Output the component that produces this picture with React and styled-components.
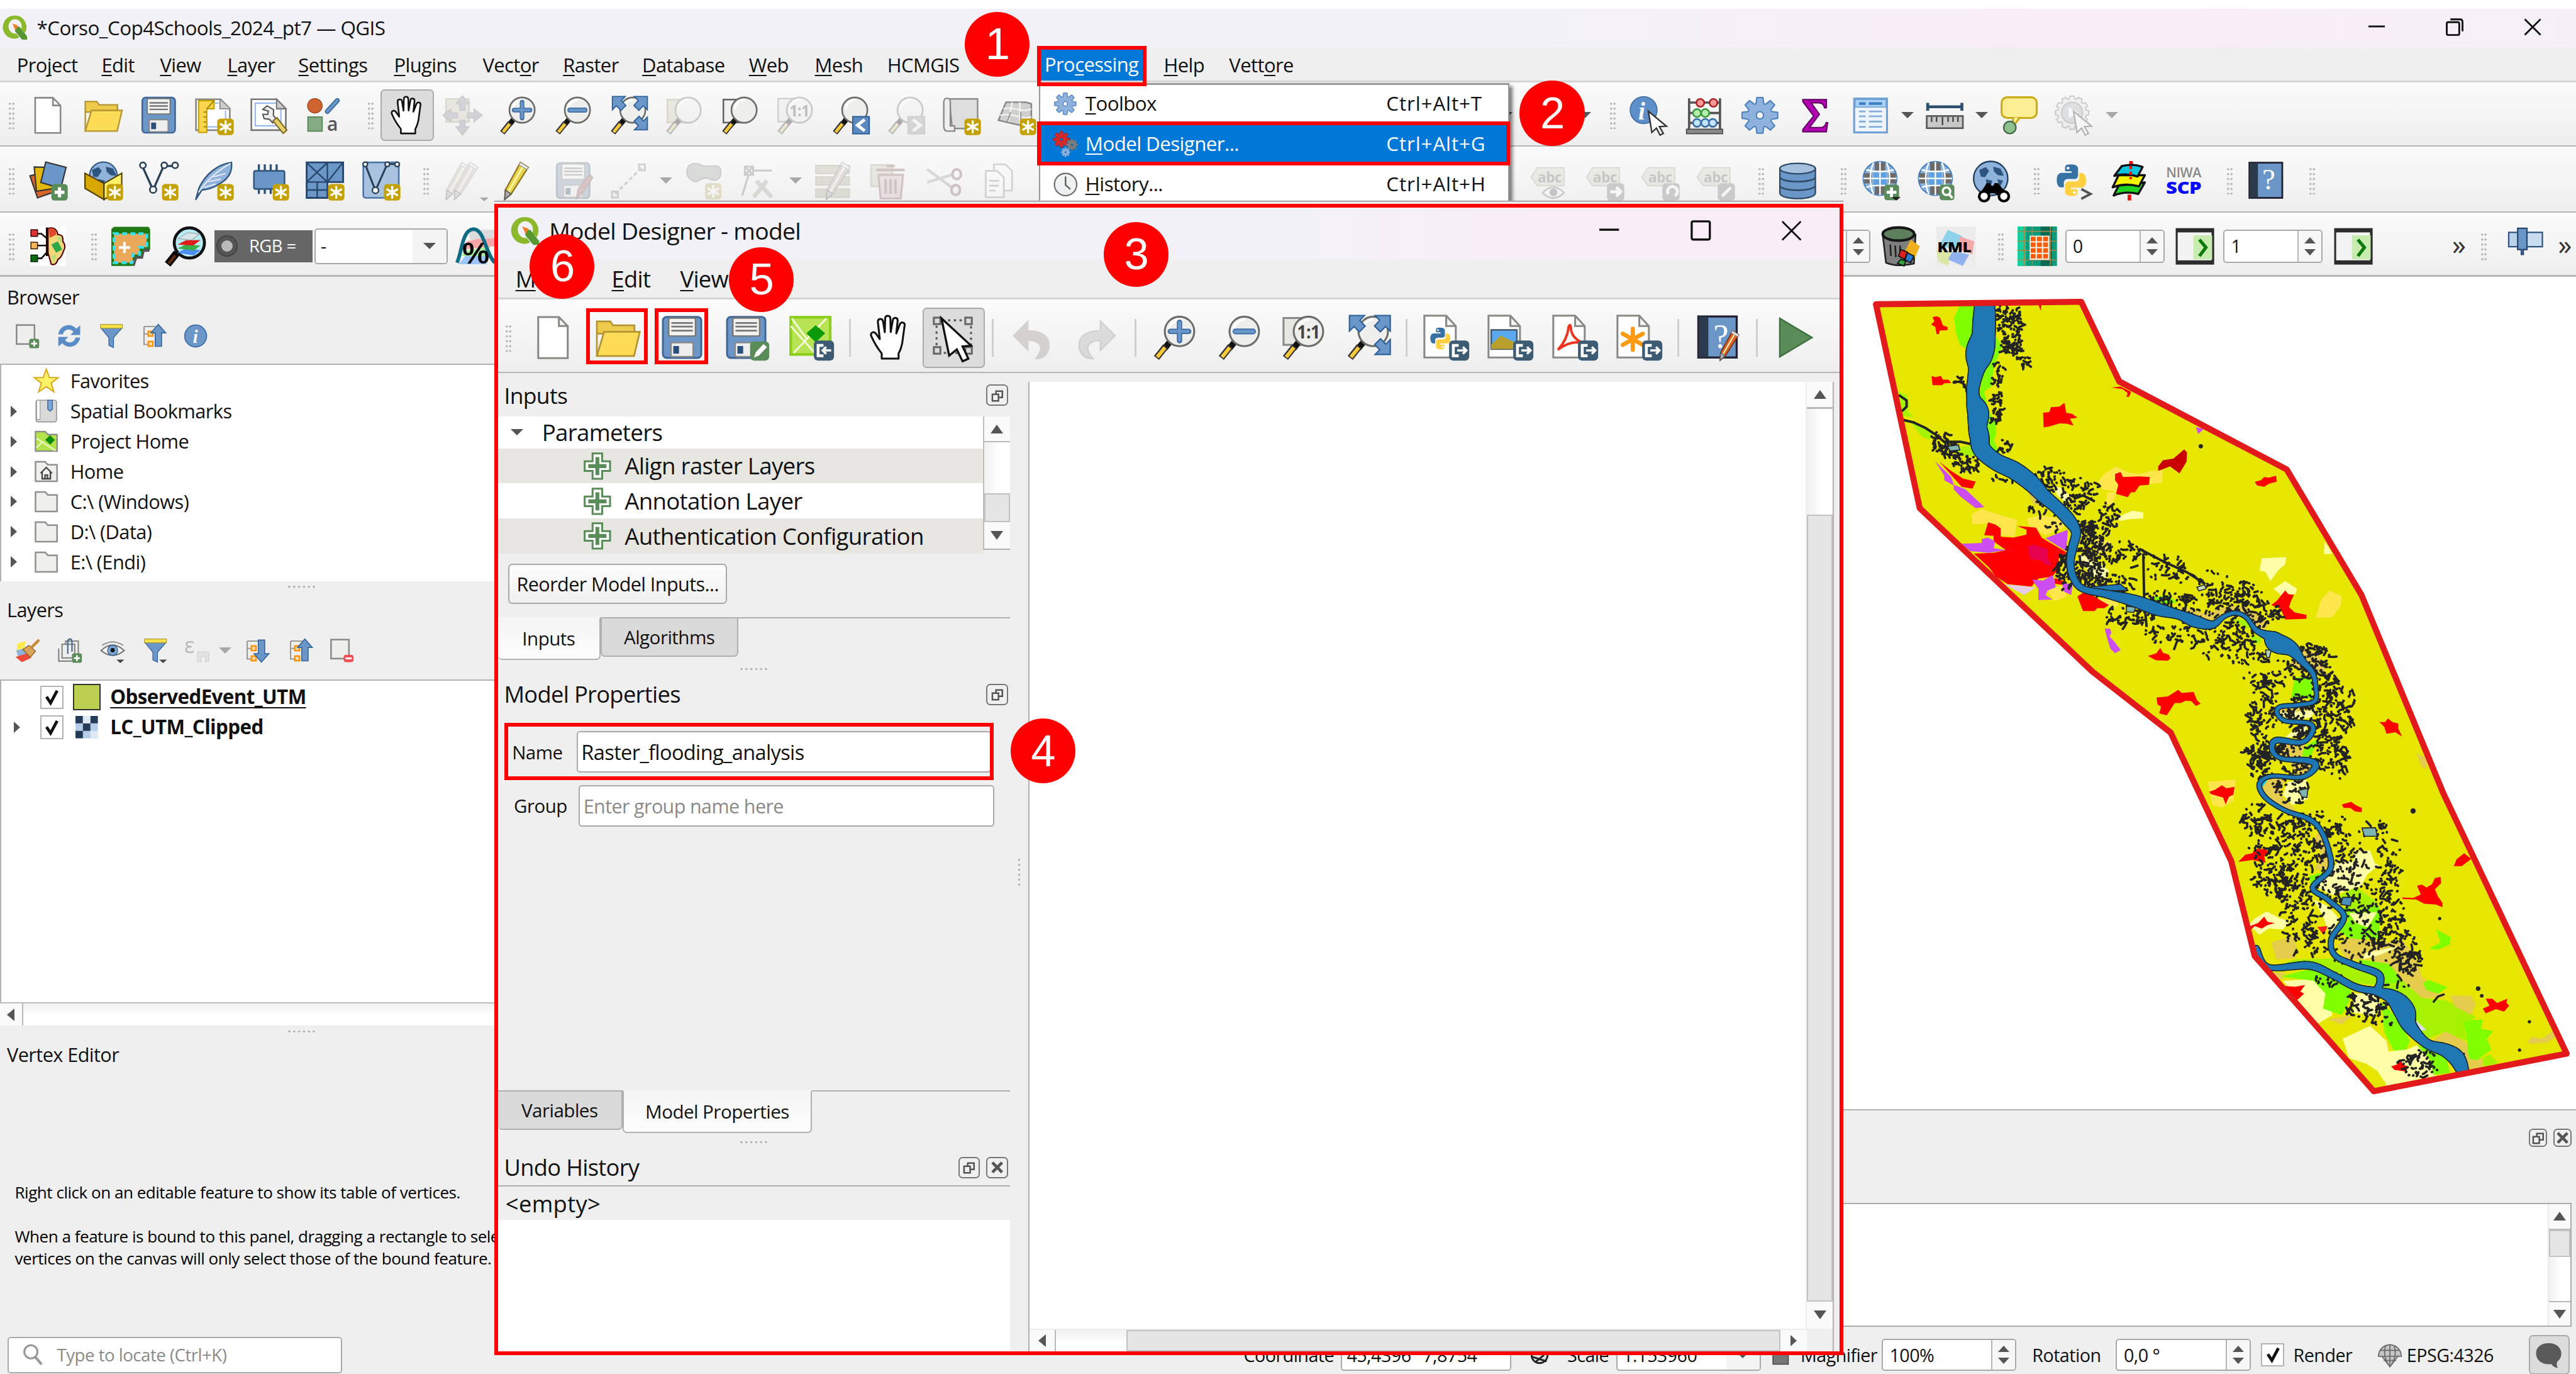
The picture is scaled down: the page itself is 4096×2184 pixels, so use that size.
import React from "react";
import styled, { createGlobalStyle, css } from "styled-components";

/* 1rem is ten layout units; the whole desktop is 156.8rem x 83.6rem. */
const GlobalStyle = createGlobalStyle`
  html { font-size: 26.1224px; }
  body { margin: 0; overflow: hidden; background: #fff; }
  * { box-sizing: border-box; letter-spacing: -0.019em; }
`;

const u = (n) => `${n / 10}rem`;
const RED = "#ff0000";

/* ------------------------------------------------------------------ */
/* Icons                                                               */
/* ------------------------------------------------------------------ */

const Svg = styled.svg`
  display: block;
  flex: none;
  width: ${(p) => u(p.$size || 24)};
  height: ${(p) => u(p.$size || 24)};
  opacity: ${(p) => (p.$faded ? 0.32 : 1)};
  filter: ${(p) => (p.$faded ? "saturate(0.5)" : "none")};
  overflow: visible;
`;

const NewBadge = ({ x = 14, y = 14, s = 1 }) => (
  <g transform={`translate(${x} ${y}) scale(${s})`}>
    <rect width="10" height="10" rx="2" fill="#c4a000" />
    <g stroke="#fff" strokeWidth="1.3" strokeLinecap="round">
      <path d="M5 1.6V8.4M2 3.3L8 6.7M8 3.3L2 6.7" />
    </g>
  </g>
);
const PlusBadge = ({ x = 14, y = 14 }) => (
  <g transform={`translate(${x} ${y})`}>
    <rect width="10" height="10" rx="2" fill="#5a8c5a" />
    <path d="M5 2V8M2 5H8" stroke="#fff" strokeWidth="2" />
  </g>
);
const ExportBadge = ({ back }) => (
  <g transform="translate(13.5 13.5)">
    <rect width="10.5" height="10.5" rx="2" fill="#3d5c73" />
    <path d="M5 2.6H2.2V8H5" fill="none" stroke="#fff" strokeWidth="1.5" />
    <path d={back ? "M9 5.2H4.6M6.4 3.4L4.6 5.2L6.4 7" : "M4.2 5.2H9M7.2 3.4L9 5.2L7.2 7"} fill="none" stroke="#fff" strokeWidth="1.2" />
  </g>
);
const Page = () => (
  <path d="M4.2 1.3H15L19.6 6V22.7H4.2Z M15 1.3V6H19.6" fill="#fff" stroke="#888a85" strokeWidth="1" />
);
const Lens = ({ children }) => (
  <g>
    <path d="M9.3 14.6L6.9 17.6" stroke="#111" strokeWidth="3.2" />
    <path d="M7.4 16.6L2.6 22.6" stroke="#333" strokeWidth="3.4" />
    <path d="M7 17.2L3 22.2" stroke="#f9c93c" strokeWidth="1.9" />
    <circle cx="14.6" cy="8.8" r="7.7" fill="#eeeeec" stroke="#6b6d68" strokeWidth="1" />
    <path d="M9 8a6 6 0 0 1 6-5.4" stroke="#fff" strokeWidth="1.2" fill="none" />
    {children}
  </g>
);
const Pointer = () => (
  <path d="M11.5 9.5L22.5 18.6L18.2 18.9L20.6 23L18.6 24L16.4 19.8L13.6 22.4Z" fill="#fff" stroke="#333" strokeWidth="0.9" />
);
const gearPath = (cx, cy, r, n = 8, inner = 0.68) => {
  let d = "";
  for (let i = 0; i < n; i++) {
    const a = (i / n) * Math.PI * 2 - Math.PI / 2;
    const pts = [[-0.32, inner], [-0.17, 1], [0.17, 1], [0.32, inner]];
    pts.forEach(([o, k], j) => {
      const x = cx + Math.cos(a + (o * 8) / n) * r * k;
      const y = cy + Math.sin(a + (o * 8) / n) * r * k;
      d += `${i === 0 && j === 0 ? "M" : "L"}${x.toFixed(2)} ${y.toFixed(2)}`;
    });
  }
  return d + "Z";
};
const Gear = ({ cx = 12, cy = 12, r = 11, fill = "#8fb2dc", stroke = "#4a7fc0", hole = "#fff", n = 8 }) => (
  <g>
    <path d={gearPath(cx, cy, r, n)} fill={fill} stroke={stroke} strokeWidth={r / 14} strokeLinejoin="round" />
    <circle cx={cx} cy={cy} r={r * 0.2} fill={hole} stroke={stroke} strokeWidth={r / 14} />
  </g>
);
const Python = () => (
  <g>
    <path d="M11.5 1.5C7.6 1.5 7.8 3.2 7.8 3.2V6H12V7H5.6S2.4 6.7 2.4 11.6S5 16.4 5 16.4H7V13.5S7 11 9.6 11H13.8S16.2 11 16.2 8.6V4.2S16.4 1.5 11.5 1.5Z" fill="#3672a4" />
    <path d="M12 22C15.9 22 15.7 20.3 15.7 20.3V17.6H11.5V16.6H18S21.4 17 21.4 12S18.6 7.2 18.6 7.2H16.9V10.1S17 12.6 14.4 12.6H10.2S7.8 12.6 7.8 15V19.4S7.4 22 12 22Z" fill="#ffd040" />
    <circle cx="9.7" cy="3.9" r=".9" fill="#fff" /><circle cx="13.9" cy="19.7" r=".9" fill="#fff" />
  </g>
);
const Floppy = () => (
  <g>
    <rect x="2" y="1.2" width="20" height="21.4" rx="2" fill="#6b97c8" stroke="#3f6798" strokeWidth="1" />
    <rect x="5" y="1.8" width="14" height="9.4" rx=".8" fill="#f2f2f0" stroke="#777" strokeWidth=".8" />
    <path d="M6.4 4.4H17.6M6.4 6.3H17.6M6.4 8.4H17.6" stroke="#777" strokeWidth=".9" />
    <rect x="6.2" y="14.6" width="11.6" height="7.4" rx=".8" fill="#eee" stroke="#888" strokeWidth=".8" />
    <rect x="7.4" y="16.4" width="3" height="4" fill="#2b5080" />
  </g>
);
const Pencil = ({ c = "#e6d34a", tip = "#8a6d1c", dx = 0 }) => (
  <g transform={`translate(${dx} 0)`}>
    <path d="M13.6 .8L18.4 3.8L8 20L4 23.4L4.4 17.6Z" fill={c} stroke={tip} strokeWidth=".8" />
    <path d="M15.8 2.2L6.2 18.8" stroke="#fff8b0" strokeWidth="1" />
    <path d="M13.6 .8L18.4 3.8L17.6 5.2L12.7 2.2Z" fill="#eee" stroke="#999" strokeWidth=".5" />
    <path d="M4.4 17.6L8 20L4 23.4Z" fill="#aaa" stroke="#555" strokeWidth=".6" />
  </g>
);
const Hand = () => (
  <path d="M8.2 23V20.3C6 17.6 4.4 15 2.8 11.4C2 9.4 4 8.4 5.2 10L7.2 12.8L6.2 3.9C6.1 1.9 8.6 1.7 8.9 3.6L9.8 9.2L10 2C10.1 .2 12.6 .2 12.7 2L12.9 9.1L14 2.8C14.4 1.1 16.7 1.5 16.5 3.4L15.8 9.8L17.7 5C18.5 3.4 20.6 4.2 20.1 6L19.2 12.6C18.9 16 18.2 18.2 17 20.3V23Z" fill="#fff" stroke="#111" strokeWidth="1" strokeLinejoin="round" />
);
const FullArrows = () => (
  <g fill="#6b97c8" stroke="#2d5f99" strokeWidth=".7">
    <path d="M2.2 .5H10L7.6 3L10.4 6L7.4 9L4.6 6.2L2.2 8.6Z" />
    <path d="M23.5 .5V8.6L21 6.2L18.3 9L15.3 6L18 3L15.6 .5Z" />
    <path d="M23.5 20.8H15.6L18 18.4L15.4 15.6L18.4 12.6L21.2 15.4L23.5 13Z" />
  </g>
);
const GlobeIcon = () => (
  <g>
    <circle cx="12" cy="10.6" r="10.2" fill="#8db4dd" stroke="#4b83c3" strokeWidth=".9" />
    <path d="M8.8 .9H15.2V5.8H8.8ZM2.4 7.4H7V13.6H2.4ZM17 7.4H21.6V13.6H17ZM8.8 15.4H15.2V20.2H8.8Z" fill="#6d6a68" />
    <rect x="8.2" y="6.4" width="7.6" height="8.4" fill="#5da0e4" />
    <path d="M12 .4V20.8M1.8 10.6H22.2M3.6 5.2C8 6.8 16 6.8 20.4 5.2M3.6 16C8 14.4 16 14.4 20.4 16M8 .9C5.6 7 5.6 14 8 20.2M16 .9C18.4 7 18.4 14 16 20.2" fill="none" stroke="#fff" strokeWidth=".9" />
  </g>
);
const EarthPatches = () => (
  <path d="M5 5.5L9 3.6L11 6L8.6 9.8L6 9.6ZM13.5 3.4L18 4.6L20 9L16.4 8.6L14 6.4ZM9 11L13 12L11.6 17L9.4 14ZM16 11L19.6 12L17.4 16Z" fill="#2d5580" />
);
const Label = ({ children }) => (
  <g>
    <path d="M1 9.8L4.8 4H21V15H4.8Z" fill="#d7d0b0" stroke="#a9a282" strokeWidth=".8" />
    <text x="5" y="13" fontFamily="Open Sans" fontWeight="700" fontSize="8.6" fill="#666">abc</text>
    {children}
  </g>
);
const GreyBadge = ({ d }) => (
  <g transform="translate(13.5 13.5)"><rect width="10.5" height="10.5" rx="2" fill="#777" /><path d={d} fill="none" stroke="#fff" strokeWidth="1.8" /></g>
);
const Book = () => (
  <g>
    <rect x="1.8" y="1" width="20" height="21.4" fill="#6b97c8" stroke="#223" strokeWidth="1.1" />
    <rect x="2" y="1.2" width="5" height="21" fill="#2b3b4d" />
    <text x="9.6" y="17.4" fontFamily="Liberation Serif" fontSize="18" fill="#fff">?</text>
  </g>
);
const TreeArrow = ({ up }) => (
  <g>
    <path d="M3 3V20H9M3 10H9M3 3H14" fill="none" stroke="#999b96" strokeWidth="1.3" />
    <rect x="7" y="7.6" width="4.4" height="4.4" fill="#fcd9a8" stroke="#ff9000" strokeWidth="1.4" />
    <rect x="7" y="17.2" width="4.4" height="4.4" fill="#fcd9a8" stroke="#ff9000" strokeWidth="1.4" />
    <path d={up ? "M16.5 1L23.6 9H19.6V21.8H13.6V9H9.6Z" : "M16.5 23L23.6 15H19.6V2H13.6V15H9.6Z"} fill="#6b97c8" stroke="#38659c" strokeWidth="1" />
  </g>
);
const Funnel = () => (
  <g>
    <path d="M2 4.4L9.6 13.6V21L14 23V13.6L22 4.4Z" fill="#6b97c8" stroke="#38659c" strokeWidth=".8" />
    <rect x="1.6" y="1" width="20.8" height="3.6" fill="#f8e24a" stroke="#a89a30" strokeWidth=".7" />
  </g>
);
const Folder = ({ fill = "#efefed", children }) => (
  <g>
    <path d="M1.5 2.5H11L13.6 5.4H22.5V21.5H1.5Z" fill={fill} stroke="#8e908b" strokeWidth="1.5" strokeLinejoin="round" />
    {children}
  </g>
);
const MiniCaret = () => <path d="M15.6 20.6H23L19.3 23.8Z" fill="#444" />;

const ART = {
  newDoc: <Page />,
  open: (
    <g stroke="#b39532" strokeWidth=".9" fill="#e0b93a">
      <path d="M1 21.6V3.6H8L9.4 5.6H20.6V10H1Z" fill="#edc94c" />
      <path d="M1 21.6L4.8 9H23.4L20.4 21.6Z" fill="#fcdb56" />
    </g>
  ),
  save: <Floppy />,
  saveAs: (<g><Floppy /><rect x="14" y="14" width="10" height="10" rx="2" fill="#5a8c5a" /><path d="M16 22.4L17 19.6L21 15.4L22.8 17L18.6 21.4Z" fill="#fff" /></g>),
  newLayout: (<g><path d="M1 2.2H16L21.6 8V21H1Z" fill="#fff" stroke="#888" /><path d="M4 4.5H15M19 9V19H5V5" fill="none" stroke="#9bbcf0" strokeWidth=".8" /><path d="M15.6 2.4V8H21.6" fill="#ccc" stroke="#888" strokeWidth=".7" /><path d="M2.6 3H12V8H7.6V22.4H2.6Z" fill="#fbd64c" stroke="#c4a000" strokeWidth=".8" /><path d="M5.6 10H7.4M5.6 13H7.4M5.6 16H7.4M5.6 19H7.4M7.6 8L12 3" stroke="#a08000" strokeWidth=".7" /><NewBadge /></g>),
  layoutMgr: (<g><path d="M1 2.2H16.4L22 8V21H1Z" fill="#fff" stroke="#777" /><rect x="3.4" y="4.6" width="15.6" height="13.8" fill="none" stroke="#9bbcf0" strokeWidth=".9" /><path d="M16.4 2.2V8H22Z" fill="#ccc" stroke="#777" strokeWidth=".8" /><path d="M8 8.4L10.6 6.2L14.6 8.6L14.4 12L16.4 14.6L14 16.6L12 14.4L8.8 14L8 11.4L11 11.4L11.4 9.4Z" fill="#eee" stroke="#555" strokeWidth=".8" /><path d="M14.2 15.4L16.6 13.4L22.6 21L20.4 23Z" fill="#e8d06a" stroke="#7b6a28" strokeWidth=".8" /></g>),
  style: (<g><ellipse cx="6" cy="6.2" rx="4.4" ry="4.4" fill="#d06430" stroke="#a14a20" strokeWidth=".6" /><path d="M19.6 3L13.6 9.6" stroke="#3c6b9e" strokeWidth="3" strokeLinecap="round" /><path d="M19.6 3L13.6 9.6" stroke="#6b97c8" strokeWidth="1.6" strokeLinecap="round" /><rect x="1.8" y="13" width="8.6" height="8.6" fill="#85ac85" stroke="#5b8c5b" strokeWidth=".8" /><text x="13.4" y="21.4" fontFamily="Open Sans" fontWeight="600" fontSize="11.5" fill="#555">a</text></g>),
  hand: <Hand />,
  panSel: (<g><rect x="2" y="2" width="14" height="14" fill="#cfc8a0" stroke="#a49c74" /><path d="M12 0L16 5H13.6V9H10.4V5H8ZM12 24L16 19H13.6V15H10.4V19H8ZM0 12L5 8V10.4H9V13.6H5V16ZM24 12L19 8V10.4H15V13.6H19V16Z" fill="#88a" stroke="#778" strokeWidth=".6" /></g>),
  zoomIn: (<Lens><path d="M14.6 4V13.6M9.8 8.8H19.4" stroke="#3f6fa8" strokeWidth="2.8" strokeLinecap="round" /><path d="M14.6 4.2V13.4M10 8.8H19.2" stroke="#6b97c8" strokeWidth="1.5" strokeLinecap="round" /></Lens>),
  zoomOut: (<Lens><path d="M10 8.8H19.2" stroke="#3f6fa8" strokeWidth="3" strokeLinecap="round" /><path d="M10 8.8H19.2" stroke="#6b97c8" strokeWidth="1.7" strokeLinecap="round" /></Lens>),
  zoomFull: (<g><Lens /><FullArrows /></g>),
  zoomSel: (<g><rect x="2" y="2.4" width="14" height="14" fill="#d8ce92" stroke="#a49c74" /><Lens /></g>),
  zoomLayer: (<g><rect x="2" y="2.4" width="13" height="14" fill="#f1f1ef" stroke="#666" strokeWidth="1" /><Lens /></g>),
  zoomNative: (<g><rect x="1.6" y="1.8" width="12" height="14" fill="#e6e6e2" stroke="#888" strokeWidth="1" /><Lens><text x="8.6" y="12.6" fontFamily="Open Sans" fontWeight="700" fontSize="9.6" textLength="12" lengthAdjust="spacingAndGlyphs" fill="#444">1:1</text></Lens></g>),
  zoomLast: (<g><Lens /><rect x="13.4" y="12.8" width="10" height="10.4" fill="#5b8ac0" stroke="#2d5f99" strokeWidth=".8" /><path d="M20.6 14.6L16.2 18L20.6 21.4" fill="none" stroke="#fff" strokeWidth="1.9" /></g>),
  zoomNext: (<g><Lens /><rect x="13.4" y="12.8" width="10" height="10.4" fill="#99a" stroke="#888" strokeWidth=".8" /><path d="M16.4 14.6L20.8 18L16.4 21.4" fill="none" stroke="#fff" strokeWidth="1.9" /></g>),
  newView: (<g><path d="M4.6 2H22V20H6.6Z" fill="#dedede" stroke="#8a8a88" strokeWidth=".9" /><path d="M1.4 4C1.4 .8 5.4 .8 5.4 4V18.4H8V21.6H3.4Q1.4 21.6 1.4 18.4Z" fill="#eee" stroke="#888" strokeWidth=".9" /><NewBadge /></g>),
  new3d: (<g><path d="M5.6 4H17.6L21 5V18L14 18L1 15Z" fill="#d0d0ce" stroke="#8a8a88" /><path d="M9.4 4L7 16M14 4L14 17M4 8C10 6 16 11 21 8M2 12C10 10 15 15 21 13" fill="none" stroke="#f4f4f4" strokeWidth=".9" /><path d="M8.4 10L6.4 16M14.6 10V17" stroke="#999" strokeWidth=".8" /><NewBadge /></g>),
  identify: (<g><circle cx="8.6" cy="8.8" r="8.2" fill="#5f8fc9" stroke="#3d6ca6" strokeWidth=".6" /><text x="5.4" y="14.4" fontFamily="Liberation Serif" fontStyle="italic" fontWeight="700" fontSize="15" fill="#fff">i</text><Pointer /></g>),
  abacus: (<g><path d="M2.6 1.6V21M21.4 1.6V21M2.6 4.2H21.4M2.6 10.6H21.4M2.6 16.6H21.4" stroke="#555" strokeWidth="1.4" /><g strokeWidth="1"><g fill="#f49a9a" stroke="#b02020"><circle cx="9.4" cy="4.4" r="2.4" /><circle cx="17.4" cy="4.4" r="2.4" /></g><g fill="#b6eeb0" stroke="#3d9a3d"><circle cx="7.4" cy="10.6" r="2.4" /><circle cx="12.4" cy="10.6" r="2.4" /></g><g fill="#c2e4ff" stroke="#3a6ea5"><circle cx="7.4" cy="16.6" r="2.4" /><circle cx="12.4" cy="16.6" r="2.4" /><circle cx="17" cy="16.6" r="2.4" /></g></g><rect x="1" y="20.4" width="22" height="2.8" fill="#888" stroke="#444" strokeWidth=".6" /></g>),
  gear: <Gear hole="#f5f5f5" />,
  sigma: <path d="M4.4 2.4H18.8V7.4H17.6Q17.2 4.4 14 4.4H9.6L14.6 11.4L8.6 19.4H15Q18 19.4 18.6 16.4H19.6L18.8 22H4.4V20.6L11 12.4L4.4 3.6Z" fill="#b300b3" stroke="#5a005a" strokeWidth=".7" />,
  table: (<g><rect x="2" y="1.8" width="20" height="20.6" fill="#eef4fb" stroke="#6fa0d6" strokeWidth="1.2" /><rect x="2.6" y="2.4" width="18.8" height="4.6" fill="#a9d2f7" stroke="#6fa0d6" strokeWidth=".6" /><path d="M5 4.8H9M11 4.8H19" stroke="#3f7cc0" strokeWidth="1.6" /><path d="M5 9.6H9M11 9.6H19M5 12.6H9M11 12.6H19M5 15.8H9M11 15.8H19M5 19H9M11 19H19" stroke="#87aed9" strokeWidth="1.1" /></g>),
  ruler: (<g><path d="M1.6 4.4V9.2M22.4 4.4V9.2M1.6 6.8H22.4" stroke="#2d5070" strokeWidth="1.8" /><rect x="1" y="12.4" width="22" height="7.4" fill="#c8c8c6" stroke="#555" strokeWidth="1" /><path d="M4 13V16M7 13V16M10.6 13V18M14 13V16M17 13V16M20 13V16" stroke="#444" strokeWidth=".9" /></g>),
  tip: (<g><rect x="1.4" y="1" width="21.4" height="12.6" rx="3.4" fill="#fbee92" stroke="#cbab18" strokeWidth="1.2" /><path d="M8.4 13.4L8 19.4L12.4 13.4" fill="#fbee92" stroke="#cbab18" strokeWidth="1.2" /><circle cx="6.4" cy="19.4" r="3.7" fill="#8cc08c" stroke="#4a6a4a" strokeWidth=".9" /></g>),
  action: (<g><path d={gearPath(10.6, 10.4, 10.2, 12, 0.84)} fill="#e4e4e4" stroke="#777" strokeWidth=".8" /><circle cx="10.6" cy="10.4" r="6.4" fill="#aab4be" stroke="#777" strokeWidth=".8" /><path d="M8.6 7L14.4 10.4L8.6 13.8Z" fill="#fff" /><Pointer /></g>),
  dataSource: (<g strokeWidth=".8" stroke="#333"><path d="M1 9L13 6L18 18L5.6 22.4Z" fill="#d9652b" /><path d="M3.6 3.6L15.6 4L16 16.6L5 18.4Z" fill="#e3b80c" /><path d="M10.6 .6L23 3.8L19.8 16.6L7.6 13Z" fill="#6b97c8" /><g stroke="none"><PlusBadge /></g></g>),
  geopackage: (<g><circle cx="12" cy="9" r="8.4" fill="#8fb3da" stroke="#2d5580" strokeWidth=".8" /><EarthPatches /><path d="M.8 7.4L12.4 13.6V23.4L.8 16.6Z" fill="#d9a800" stroke="#4f3c00" strokeWidth=".8" /><path d="M23.2 7.4L12.4 13.6V23.4L23.2 16.6Z" fill="#fff26a" stroke="#4f3c00" strokeWidth=".8" /><NewBadge /></g>),
  shape: (<g><path d="M2 3L8.6 17.6L15 3H21" fill="none" stroke="#2a4257" strokeWidth="1.3" /><g fill="#fff" stroke="#2a4257" strokeWidth="1"><circle cx="2.4" cy="2.6" r="1.8" /><circle cx="8.6" cy="17.4" r="2" /><circle cx="15.4" cy="2.6" r="1.8" /><circle cx="22" cy="2.6" r="1.8" /></g><NewBadge /></g>),
  feather: (<g><path d="M.8 23.6L3 16C7 8 14 2 22.6 .8C23.4 7 20 11.6 14 14.6C11 16.4 7 17.4 4.6 17.6Z" fill="#8fb3da" stroke="#32587f" strokeWidth=".9" /><path d="M2.6 19C8 11 14 6 22 1.4M6 16L13 14M8.6 12.6L16 11M11.6 9.6L19 7.6" stroke="#eef" strokeWidth=".7" fill="none" /><NewBadge /></g>),
  chip: (<g><path d="M5.6 2V20M9.2 2V20M12.8 2V20M16.4 2V20" stroke="#2e5278" strokeWidth="1.3" /><rect x="2.6" y="6" width="18.6" height="11" rx="1" fill="#6b97c8" stroke="#32587f" strokeWidth="1" /><NewBadge /></g>),
  mesh: (<g><path d="M1 .8H23.2V12.8H13.6V22.4H1Z" fill="#6b97c8" stroke="#26466b" strokeWidth="1.1" /><path d="M13.6 1V12.8M1 12.8H13.6M1 1L13.6 12.8M13.6 1L1 12.8M13.6 12.8L23 1M7.4 12.8V22M1 17.6H13.6" stroke="#26466b" strokeWidth=".9" /><NewBadge /></g>),
  gpx: (<g><rect x="1.4" y=".8" width="21.6" height="21.6" rx="1.4" fill="#a9c2e0" stroke="#4b76a8" strokeWidth="1" /><path d="M2.4 1.6L8.8 18L16 1.8H22.6" fill="none" stroke="#2a4257" strokeWidth="1.2" /><g fill="#fff" stroke="#2a4257" strokeWidth=".9"><circle cx="2.6" cy="2" r="1.4" /><circle cx="8.8" cy="17.8" r="1.9" /><circle cx="16" cy="2" r="1.4" /><circle cx="22" cy="2" r="1.4" /></g><NewBadge /></g>),
  pencils: (<g opacity=".9"><Pencil c="#c9b5a8" tip="#998" dx={-2} /><Pencil c="#c9b5a8" tip="#998" dx={3} /></g>),
  pencil: <Pencil />,
  saveEdits: (<g><Floppy /><path d="M22 8L15 17L14 23L18 19L24 10Z" fill="#c55" stroke="#844" strokeWidth=".6" /></g>),
  digitize: (<g fill="none" stroke="#888"><path d="M4 20L20 4" strokeDasharray="2.4 1.6" strokeWidth="1.3" /><rect x="2" y="18.6" width="3.6" height="3.6" strokeWidth="1.2" /><rect x="18.4" y="2" width="3.6" height="3.6" strokeWidth="1.2" /></g>),
  blob: (<g><path d="M2 7C2 0 8 1 12 3C17 4 22 .8 22.6 6C23 12 19 12.6 15 10.6C11 9 9 14 5.6 12C3 10.6 2 9 2 7Z" fill="#9aa79a" stroke="#777" strokeWidth=".8" /><g opacity=".8"><NewBadge x={13} y={13.4} /></g></g>),
  vertexTool: (<g fill="none" stroke="#777" strokeWidth="1.2"><rect x="3.6" y="3.4" width="5" height="5" /><path d="M3.6 3.4L8.6 8.4M8.6 3.4L3.6 8.4M9 5.8H20M5.6 9L2 21" /><path d="M9 22L17 12M10.6 12L20 22" stroke="#9a8" strokeWidth="2.6" /></g>),
  multiEdit: (<g><path d="M1.6 2.6H22V7.6H1.6ZM1.6 9.6H22V14.6H1.6ZM1.6 17H22V22H1.6Z" fill="#b9ae80" stroke="#99906a" strokeWidth=".7" /><Pencil c="#c9a5a8" tip="#877" dx={4} /></g>),
  trash: (<g><rect x="1.6" y="2.4" width="13" height="13" fill="#cfc8a0" stroke="#a49c74" /><path d="M6 8.4H21L19.6 22.8H7.4Z" fill="#e6b5b5" stroke="#a55" strokeWidth="1.2" /><path d="M4.6 5.4H22M11 3H16M10.4 11V20M13.4 11V20M16.4 11V20" stroke="#a55" strokeWidth="1.6" /></g>),
  scissors: (<g fill="none" stroke="#888" strokeWidth="1.6"><path d="M2 5L17 16M2 13L18 8" stroke="#999" /><ellipse cx="20" cy="8" rx="2.6" ry="3" stroke="#a55" /><ellipse cx="19.4" cy="17.6" rx="2.6" ry="3" stroke="#a55" /></g>),
  copy: (<g fill="#fff" stroke="#888" strokeWidth="1"><path d="M9 2H16L20 6V18H9Z" /><path d="M4 6H11L15 10V22H4Z" /><path d="M6 12H12M6 15H12M6 18H10" /></g>),
  labelShow: (<Label><path d="M8 19.4Q14.4 12.4 21 19.4Q14.4 25.4 8 19.4Z" fill="#fff" stroke="#777" /><circle cx="14.6" cy="19" r="2.4" fill="#667" /></Label>),
  labelMove: (<Label><GreyBadge d="M2 5.2H8.4M5.6 2.4L8.4 5.2L5.6 8" /></Label>),
  labelRotate: (<Label><GreyBadge d="M7.6 7.6A3 3 0 1 0 3.6 6.6" /></Label>),
  labelEdit: (<Label><GreyBadge d="M2.6 8L8 2.6" /></Label>),
  database: (<g><path d="M1.2 4.6V19.4C1.2 24 22.8 24 22.8 19.4V4.6Z" fill="#6b97c8" stroke="#2e4a66" strokeWidth=".9" /><ellipse cx="12" cy="4.6" rx="10.8" ry="3.2" fill="#a5c0dd" stroke="#2e4a66" strokeWidth=".9" /><path d="M1.2 10C3 13.4 21 13.4 22.8 10M1.2 15.2C3 18.6 21 18.6 22.8 15.2" fill="none" stroke="#2e4a66" strokeWidth="1" /></g>),
  globePlus: (<g><GlobeIcon /><rect x="14.6" y="14.4" width="9" height="9.4" rx="1.6" fill="#5a8c5a" /><path d="M19 16V22M16 19H22" stroke="#fff" strokeWidth="1.8" /><path d="M19 21.8H24.6L21.8 24Z" fill="#222" /></g>),
  globeFind: (<g><GlobeIcon /><rect x="14.6" y="14.4" width="9" height="9.4" rx="1.6" fill="#5a8c5a" /><circle cx="18.8" cy="18.4" r="2.3" fill="none" stroke="#fff" strokeWidth="1.3" /><path d="M20.4 20.2L22.4 22.6" stroke="#fff" strokeWidth="1.5" /></g>),
  globeBino: (<g><circle cx="12" cy="10.6" r="10.4" fill="#8fb3da" stroke="#22405f" strokeWidth=".9" /><EarthPatches /><path d="M4 22L9.6 13.4H11.6L12.4 15H13.6L14.4 13.4H16.4L23.6 22L19 23L14.4 19.6H12L8 23Z" fill="#000" /><circle cx="8" cy="21.4" r="3" fill="#fff" stroke="#000" strokeWidth="1.6" /><circle cx="20" cy="21.4" r="3" fill="#fff" stroke="#000" strokeWidth="1.6" /></g>),
  python: (<g><g transform="translate(-.2 .6) scale(.94)"><Python /></g><path d="M17 17L22.6 20L17 23" fill="none" stroke="#555" strokeWidth="1.5" /></g>),
  stack: (<g stroke="#111" strokeWidth="1.3" strokeLinejoin="round"><path d="M13.6 0V5" stroke="#e11" strokeWidth="2.2" /><path d="M3 21L6 15L22 13L18 20Q10 18 3 21Z" fill="#1fd41f" /><path d="M2.4 16L6 8.6H22L18.4 15.4Q10 13 2.4 16Z" fill="#f6f600" /><path d="M3.4 9L8 3Q15 1.4 20.6 3.6L17.6 9.4Q10 7 3.4 9Z" fill="#0bc5dc" /><path d="M13.4 3V11" stroke="#e11" strokeWidth="1.6" strokeDasharray="2 1.4" /><path d="M12.6 20.4V24" stroke="#e11" strokeWidth="2.2" /></g>),
  niwa: (<g fontFamily="Open Sans"><text x="1.2" y="9.8" fontSize="8.4" fontWeight="600" textLength="21.4" lengthAdjust="spacingAndGlyphs" fill="#8a8a8a">NIWA</text><text x="1.2" y="20" fontSize="10" fontWeight="800" textLength="21.4" lengthAdjust="spacingAndGlyphs" fill="#0808ff">SCP</text></g>),
  help: <Book />,
  helpEdit: (<g><Book /><g transform="translate(10.4 8) scale(.68)"><Pencil c="#d9622b" tip="#7a3210" /></g></g>),
  brain: (<g><rect x="1.2" y="0" width="21.6" height="24" fill="#fff" /><path d="M5 4.4H8L11 7M5 11.6H11M5 19.4H8L11 16" stroke="#111" strokeWidth="1" fill="none" /><rect x="1.6" y="2" width="4" height="4" fill="#d33" stroke="#300" strokeWidth=".6" /><rect x="1.6" y="9.6" width="4" height="4" fill="#f7b45a" stroke="#420" strokeWidth=".6" /><rect x="1.6" y="17.4" width="4" height="4" fill="#0a6b12" stroke="#020" strokeWidth=".6" /><path d="M12 1.2Q17 -.4 18 5Q21.4 4.6 21 9Q23.4 12 21.4 15Q20 19.4 18 20Q17 24 14 23L12 16Z" fill="#f3d77a" stroke="#500" strokeWidth=".8" /><path d="M12.4 1.4Q17 0 17 5L13 7Z" fill="#e2492c" /><path d="M14 11L18 9L20.6 14L17 16Z" fill="#2fa84a" /><path d="M17 7L20 6L20.4 10ZM14 18L17 17L16 22Z" fill="#b8e07a" /><path d="M11.4 .6V18" stroke="#200" strokeWidth="1.4" /></g>),
  clip: (<g><path d="M.4 1.6L2 .2H23L24 1.6V14H20L19 18H15.6L14 24H.4Z" fill="#1f7a14" /><path d="M2 4.4H22V12.6H17.6V17H13.4V22H2Z" fill="#e9a85a" stroke="#37dff2" strokeWidth="1.7" strokeDasharray="3 2" /><path d="M8.4 9.4V16.2M5 12.8H11.8" stroke="#fff" strokeWidth="1.6" /><path d="M13.4 23.6L15 18H18.6L20 13.6H24L23.4 15.4H20.6L19.6 19.6H16L14.6 24Z" fill="#555" /></g>),
  rgbLens: (<g><path d="M1 23L6.6 16" stroke="#000" strokeWidth="4.4" /><path d="M1.6 22.6L5.6 17.6" stroke="#5e2b0e" strokeWidth="1.8" /><circle cx="14.2" cy="10" r="9.2" fill="#b6edf5" stroke="#111" strokeWidth="1.8" /><path d="M7 16L12 13.4L21 14.4L17 17.6Z" fill="#4e8ef0" /><path d="M7 13.4L12 11L21 11.6L17 14.6Z" fill="#3cae4c" /><path d="M7 11L12 8.4L21 8.2L16.6 11.6Z" fill="#e01c1c" /><path d="M7.4 7.4L13 3.8L20.6 4.4L15.6 8.2Z" fill="#d8e6ea" stroke="#999" strokeWidth=".4" /></g>),
  percent: (<g><path d="M6 18L20 15L19 23H2Z" fill="#9cc4ff" /><path d="M5 15L21 12L20 18H4Z" fill="#a8f0a0" /><path d="M7 9L24 5V12L6 14Z" fill="#f7a7a7" /><path d="M8 2H24V7L9 8Z" fill="#dcdcdc" /><path d="M1 22C4 16 4 2 11 1.6C18 2 18 16 24 22" fill="none" stroke="#0d6b84" strokeWidth="2.2" /><text x="4.2" y="22.4" fontFamily="Liberation Sans" fontWeight="700" fontSize="18.6" fill="#000">%</text></g>),
  bin: (<g><path d="M1 5L3 22Q10 25 20 22.6L21 5Z" fill="#7e807e" stroke="#222" strokeWidth="1" /><ellipse cx="10.6" cy="4.6" rx="9.6" ry="4" fill="#5e7f5e" stroke="#161616" strokeWidth="1.6" /><path d="M5.6 11L6 18M8.6 11.6L9 18.6M11.6 11.6V17" stroke="#222" strokeWidth="1" /><path d="M18 8L23.6 12L20.6 19L14.6 15Z" fill="#efb01e" /><path d="M12 14L16 15.6L14.4 20L10.6 18Z" fill="#d22" stroke="#111" strokeWidth=".7" /><path d="M16 16L20 18L18 22L14.6 20.4Z" fill="#2a7ad2" stroke="#111" strokeWidth=".7" /><path d="M12 20L15 21L14 24L10 22.4Z" fill="#36a43c" stroke="#111" strokeWidth=".7" /></g>),
  kml: (<g><rect width="24" height="24" fill="#ececec" /><path d="M7 2L16 6L12 15L2 11Z" fill="#8ed3ea" /><path d="M14 6L23 9L22 17L14 14Z" fill="#f4a9a9" /><path d="M0 14L9 16L7 24L1 21Z" fill="#dbe7a4" /><path d="M10 15L20 17L16 24L7 20Z" fill="#8fb2ee" /><text x=".6" y="15.8" fontFamily="Open Sans" fontWeight="800" fontSize="9" textLength="20.6" lengthAdjust="spacingAndGlyphs" fill="#000">KML</text></g>),
  matrix: (<g><rect width="24" height="24" fill="#0a9b7b" /><rect width="5" height="24" fill="#14cfa0" /><rect x="14" width="7" height="24" fill="#0b6b52" /><path d="M0 3H24M0 9H24M0 14.6H24M0 20.4H24M4 0V24M9 0V24M20 0V24" stroke="#a8874a" strokeWidth=".6" /><rect x="7.4" y="5.6" width="12" height="14.6" fill="#fff" /><g fill="#ff5a00">{[0, 1, 2, 3].map((r) => [0, 1, 2].map((c) => <rect key={`${r}${c}`} x={8 + c * 3.8} y={6.2 + r * 3.5} width="3" height="2.8" />))}</g></g>),
  apply: (<g><rect x=".2" y="1" width="23.4" height="22.2" fill="#2c2c2c" /><rect x="1.4" y="3.6" width="20.6" height="17" fill="#f3f3f3" /><rect x="11" y="5.4" width="11.4" height="14.6" fill="#c8ebb0" /><path d="M14.6 8L18.6 12.8L14.6 18" fill="none" stroke="#0a7a0a" strokeWidth="2" /></g>),
  georef: (<g transform="translate(0 -3.4)"><path d="M0 5.4H9V15.6H0Z" fill="#b9d0ea" stroke="#2d5580" strokeWidth="1" /><path d="M11 5.4H24V15.6H11Z" fill="#c9dcf0" stroke="#2d5580" strokeWidth="1" /><path d="M6.4 2.4H13V17.6H10.4V21H9V17.6H6.4Z" fill="#6b97c8" stroke="#26466b" strokeWidth="1" /></g>),
  addLayer: (<g><rect x="2" y="1.6" width="17" height="18" fill="#eeeeec" stroke="#888a85" strokeWidth="1.5" /><rect x="14" y="14.6" width="9.4" height="9" rx="2" fill="#5a8c5a" /><path d="M18.7 16.4V22M15.8 19.2H21.6" stroke="#fff" strokeWidth="1.6" /></g>),
  removeLayer: (<g><rect x="2" y="1.6" width="17" height="18" fill="#eeeeec" stroke="#888a85" strokeWidth="1.5" /><rect x="14" y="16" width="9.4" height="7" rx="2.4" fill="#ef4f55" /><path d="M15.8 19.4H21.6" stroke="#fff" strokeWidth="1.8" /></g>),
  refresh: (<g fill="#5a8cc8"><path d="M1.6 10.4C3 1 14 -1 18.6 5L22.4 2V11H13L16 8C12.6 4.4 7.4 5.4 6 10.4Z" /><path d="M22.4 13.4C21 22.6 10 24.8 5.4 18.8L1.6 22V12.8H11L8 16C11.4 19.6 16.6 18.4 18 13.4Z" /></g>),
  funnel: <Funnel />,
  funnelMenu: (<g><Funnel /><MiniCaret /></g>),
  collapse: <TreeArrow up />,
  expand: <TreeArrow />,
  info: (<g><circle cx="12" cy="12" r="10.4" fill="#6b97c8" stroke="#3d6ca6" strokeWidth="1" /><text x="9.4" y="18.4" fontFamily="Liberation Serif" fontStyle="italic" fontWeight="700" fontSize="17" fill="#fff">i</text></g>),
  star: <path d="M12 .4L15 8.6L23.6 8.8L16.8 14L19.4 22.6L12 17.6L4.6 22.6L7.2 14L.4 8.8L9 8.6Z" fill="#fcf26a" stroke="#d9a91c" strokeWidth="1.2" />,
  bookmark: (<g><rect x="2" y="1.4" width="20" height="21" rx="2" fill="#d9d9d9" stroke="#999" strokeWidth="1" /><path d="M2.6 1.4H6V20H2.6Z" fill="#fff" stroke="#999" strokeWidth=".7" /><path d="M13.4 1.4H18V10L15.7 12L13.4 10Z" fill="#7da6d4" stroke="#3d6ca6" strokeWidth=".9" /></g>),
  projectHome: (<Folder fill="#b4e24a"><path d="M2.4 9L21 21M2.4 18L9 12" stroke="#eaf8c4" strokeWidth="1.4" /><path d="M15.6 6L20.4 10.6L16 15.2L11 10.6Z" fill="#0b8a0b" /></Folder>),
  homeFolder: (<Folder><path d="M6.4 13.6L12 8L17.6 13.6M8 12.4V19H16V12.4M10.8 19V15.4H13.2V19" fill="none" stroke="#444" strokeWidth="1.4" /></Folder>),
  folder: <Folder />,
  drive: (<g><circle cx="12" cy="12" r="10" fill="#6b97c8" /><path d="M6 6L12 4L10 9Z" fill="#c9dcf0" /></g>),
  brush: (<g><path d="M3 5L11 3L9 10L2 12Z" fill="#fce94f" /><path d="M1.6 12L9 10L12 16L4 19Z" fill="#8fb3da" /><path d="M1 18L12 14.6L16 19L7 23Z" fill="#f04a3a" /><path d="M8 11L15 18.4L20 12.6L13.6 7Z" fill="#d9a45a" stroke="#8b5f20" strokeWidth=".8" /><path d="M16.6 8.6L22.6 2.6" stroke="#c98a3a" strokeWidth="2.6" strokeLinecap="round" /></g>),
  group: (<g fill="#eee" stroke="#888a85" strokeWidth="1.3"><rect x="8" y="3" width="12" height="13" /><rect x="4.6" y="6" width="12" height="13" /><path d="M1.4 10V22H14" fill="none" /><path d="M10 15V4Q10 1 12 1Q14 1 14 4V13" fill="none" stroke="#456a8c" /><g stroke="none"><rect x="14" y="14.6" width="9.4" height="9" rx="2" fill="#5a8c5a" /><path d="M18.7 16.4V22M15.8 19.2H21.6" stroke="#fff" strokeWidth="1.6" /></g></g>),
  eye: (<g><path d="M1 12Q12 1.6 23 12Q12 21 1 12Z" fill="#f4f4f4" stroke="#777" strokeWidth="1.2" /><path d="M2 7Q12 .6 22 7" fill="none" stroke="#888" strokeWidth="1" /><circle cx="12" cy="11.8" r="4.8" fill="#7da6d4" stroke="#35608f" strokeWidth=".8" /><circle cx="12" cy="11.6" r="2" fill="#111" /><MiniCaret /></g>),
  epsilon: (<g><text x="0" y="15" fontFamily="Open Sans" fontSize="21" fill="#444">ε</text><path d="M13 13.6H24V23H20.6V18H16.4V23H13Z" fill="#ccc" stroke="#999" strokeWidth=".8" /></g>),
  raster: (<g><rect width="24" height="24" fill="#b4cdea" /><path d="M0 0H8V8H0ZM16 0H24V8H16ZM8 8H16V16H8ZM0 16H8V24H0Z" fill="#253b55" /><path d="M8 0H16V8H8ZM16 16H24V24H16Z" fill="#dfe9f5" /></g>),
  modelHome: (<g><rect x="1.4" y="1.4" width="20.6" height="19.4" fill="#b8e354" stroke="#8ccf1a" strokeWidth="1.4" /><path d="M1.4 6L14 20M20 2L3 20M2 2L10 13" stroke="#f2fbd6" strokeWidth="1" /><path d="M14.4 5.6L19.4 9.8L14.4 14.4L9.6 9.8Z" fill="#0b9a0b" /><ExportBadge back /></g>),
  select: (<g><rect x="3" y="3" width="18" height="17" fill="none" stroke="#555" strokeWidth="1" strokeDasharray="1.2 1.8" /><g fill="#dcdcdc" stroke="#666" strokeWidth="1"><rect x="1.6" y="1.6" width="3.4" height="3.4" /><rect x="18" y="1.6" width="3.4" height="3.4" /><rect x="1.6" y="17" width="3.4" height="3.4" /><rect x="18" y="17" width="3.4" height="3.4" /></g><path d="M5.6 2L21 16.2L16.6 16.6L19.6 23L16.6 24.4L13.6 18.2L9.6 21.4Z" fill="#fff" stroke="#111" strokeWidth="1.1" /></g>),
  undo: <path d="M10 3.4V8.4C18 8.4 21.6 12 21 17Q20 23 14 23Q18 18 16 15.6Q14 13.4 10 13.6V18.6L2.4 11Z" fill="#9c8678" stroke="#988" strokeWidth=".6" />,
  redo: <path d="M14 3.4V8.4C6 8.4 2.4 12 3 17Q4 23 10 23Q6 18 8 15.6Q10 13.4 14 13.6V18.6L21.6 11Z" fill="#a4aaa4" stroke="#888" strokeWidth=".8" />,
  exPython: (<g><path d="M.6 .6H12L17 6V22.4H.6Z M12 .6V6H17" fill="#fff" stroke="#888a85" /><g transform="translate(2.4 6) scale(.55)"><Python /></g><ExportBadge /></g>),
  exImage: (<g><path d="M.6 .6H12L17 6V22.4H.6Z M12 .6V6H17" fill="#fff" stroke="#888a85" /><rect x="2" y="8" width="13.4" height="10" fill="#5aa9ee" stroke="#456" strokeWidth=".8" /><path d="M2 15.6L7 11L15.4 15V18H2Z" fill="#b9a02c" /><ExportBadge /></g>),
  exPdf: (<g><path d="M.6 .6H12L17 6V22.4H.6Z M12 .6V6H17" fill="#fff" stroke="#888a85" /><path d="M3 18.4Q8 13 8.6 6.4Q9.6 4.4 9.8 7Q10 12 15.6 14.6Q9 13.6 3 18.4Z" fill="none" stroke="#f0331f" strokeWidth="1.3" /><ExportBadge /></g>),
  exSvg: (<g><path d="M.6 .6H12L17 6V22.4H.6Z M12 .6V6H17" fill="#fff" stroke="#888a85" /><path d="M8.6 7.4V18.4M3.4 10L13.8 15.8M13.8 10L3.4 15.8" stroke="#ff9a13" strokeWidth="2.2" strokeLinecap="round" /><ExportBadge /></g>),
  play: <path d="M3.6 2L20.4 12L3.6 22Z" fill="#5a8c5a" stroke="#3f7040" strokeWidth=".8" />,
  param: (<g><path d="M8 1.4H16V8H22.6V16H16V22.6H8V16H1.4V8H8Z" fill="#fff" stroke="#5a8c5a" strokeWidth="1.6" /><path d="M12 4.4V19.6M4.4 12H19.6" stroke="#5a8c5a" strokeWidth="3.2" /></g>),
  modelGears: (<g><Gear cx={8} cy={8} r={7.6} fill="#d42a2a" stroke="#b01818" hole="#0a6cc8" /><Gear cx={18} cy={13} r={5.4} fill="#7d7d80" stroke="#666" hole="#0a6cc8" /><Gear cx={12} cy={20} r={4.4} fill="#8fb2dc" stroke="#6a94c8" hole="#0a6cc8" /></g>),
  clock: (<g><circle cx="12" cy="12" r="11" fill="#eef1f1" stroke="#6a6c68" strokeWidth="1.3" /><path d="M12 4V12.4L16.6 16.6" fill="none" stroke="#555" strokeWidth="1.4" /></g>),
  search: (<g fill="none" stroke="#999" strokeWidth="2.2"><circle cx="10" cy="9" r="7.4" /><path d="M15 15L22 23" strokeWidth="3" /></g>),
  crs: (<g fill="#c4c4c4" stroke="#666" strokeWidth="1"><path d="M1 13Q2 3 12 2Q22 3 23 13H19.6L12 23L4.4 13Z" /><path d="M12 2V23M8 3Q5 12 10.4 21M16 3Q19 12 13.6 21M1 13H23M3 7.4H21M6 17H18" fill="none" /></g>),
  bubble: <path d="M12 1.6C3 1.6 0 7 1 12C2 18 8 20.4 14 19.6Q16 22.6 19.6 23Q18 20.4 19 17.6C26 12 22 1.6 12 1.6Z" fill="#5a5a5a" />,
  qgis: (<g><path d="M12 1A10.4 10.6 0 1 0 16 21L13 17.4A6 6.6 0 1 1 17.6 13.4L21 17A10.4 10.6 0 0 0 12 1Z" fill="#8cb92b" /><path d="M12 11L16 11L23 20V23H18.4L12 15.4Z" fill="#589632" /><path d="M9.6 8.4L14.6 10L12.4 14.6Z" fill="#f0802c" /></g>),
  coordToggle: (<g><circle cx="12" cy="12" r="9" fill="#ddd" stroke="#222" strokeWidth="2" /><path d="M4 14L20 19M7 20L17 12" stroke="#222" strokeWidth="2" /></g>),
  lock: (<g><path d="M4 11H20V22H4Z" fill="#777" stroke="#444" /><path d="M7 11V6Q12 0 17 6V11" fill="none" stroke="#555" strokeWidth="2.4" /></g>),
};

const Icon = ({ name, size, faded }) => (
  <Svg viewBox="0 0 24 24" $size={size} $faded={faded}>{ART[name]}</Svg>
);

/* ------------------------------------------------------------------ */
/* Shared controls                                                     */
/* ------------------------------------------------------------------ */

const Desktop = styled.div`
  position: relative;
  display: flex;
  flex-direction: column;
  width: 156.8rem;
  height: 83.6rem;
  overflow: hidden;
  padding-top: 0.535rem;
  background: #fff;
  color: #111;
  font-family: "Open Sans", "Noto Sans", sans-serif;
  font-size: 1.18rem;
  line-height: 1.2;
  white-space: nowrap;
`;

const TitleBar = styled.header`
  flex: none;
  display: flex;
  align-items: center;
  height: ${(p) => u(p.$h)};
  padding: ${(p) => (p.$dialog ? "0 2.3rem 0.3rem 0.74rem" : "0 2.15rem 0.1rem 0.12rem")};
  background: linear-gradient(90deg, #f3f1f8 0, #f3f1f8 60%, #f9edf7 80%, #f9edf7 ${(p) => (p.$dialog ? "100%" : "84%")}, #f5f0f7 100%);
  font-size: ${(p) => (p.$dialog ? "1.43rem" : "1.205rem")};
`;
const TitleText = styled.span`
  flex: 1;
  padding-left: ${(p) => u(p.$gap)};
`;
const WindowButtons = styled.div`
  display: flex;
  gap: ${(p) => u(p.$gap)};
`;
const Glyph = styled.svg`
  width: ${(p) => u(p.$size || 11)};
  height: ${(p) => u(p.$size || 11)};
  fill: none;
  stroke: ${(p) => p.$ink || "#111"};
  stroke-width: ${(p) => p.$stroke || 1.1};
  overflow: visible;
`;

const MenuStrip = styled.nav`
  flex: none;
  display: flex;
  align-items: center;
  height: ${(p) => u(p.$h)};
  padding: 0.1rem 0 0 ${(p) => u(p.$left)};
  border-bottom: 0.15rem solid #d4d4d4;
  background: #efefef;
  font-size: ${(p) => (p.$dialog ? "1.39rem" : "1.185rem")};
`;
const MenuItem = styled.span`
  flex: none;
  width: ${(p) => u(p.$w)};
  color: ${(p) => (p.$active ? "#fff" : "#111")};
  ${(p) => p.$active && css`
    height: 1.9rem;
    line-height: 1.9rem;
    margin: 0 1.25rem 0 -0.4rem;
    padding-left: 0.4rem;
    background: #0078d7;
  `}
`;
const Key = styled.u`
  text-decoration-thickness: 0.08rem;
  text-underline-offset: 0.17rem;
  text-decoration-skip-ink: none;
`;
/* Draws the letter that follows "&" underlined, as menus do for shortcuts. */
const Mnemonic = ({ text }) => {
  const at = text.indexOf("&");
  if (at < 0) return text;
  return <>{text.slice(0, at)}<Key>{text[at + 1]}</Key>{text.slice(at + 2)}</>;
};

const Toolbar = styled.div`
  flex: none;
  display: flex;
  align-items: center;
  height: ${(p) => u(p.$h)};
  padding-top: ${(p) => u(p.$top || 1.6)};
  border-bottom: ${(p) => u(p.$line || 0.9)} solid #b6b6b6;
  background: linear-gradient(#fbfbfb, #eeeeee);
`;
const GripBox = styled.span`
  flex: none;
  display: flex;
  justify-content: flex-end;
  width: ${(p) => u(p.$w || 16.4)};
  padding-right: ${(p) => u(p.$pad || 3.2)};
`;
const GripDots = styled.i`
  width: 0.42rem;
  height: 1.7rem;
  background-image: radial-gradient(circle, #b4b4b4 0.055rem, transparent 0.07rem);
  background-size: 0.21rem 0.3rem;
`;
const Grip = (p) => <GripBox {...p}><GripDots /></GripBox>;
const ToolCell = styled.span`
  flex: none;
  position: relative;
  display: flex;
  align-items: center;
  justify-content: center;
  width: ${(p) => u(p.$w || 33.7)};
  height: ${(p) => u(p.$h || 31)};
`;
const Pressed = styled.span`
  display: flex;
  align-items: center;
  justify-content: center;
  width: ${(p) => u(p.$w)};
  height: ${(p) => u(p.$h)};
  border: 0.1rem solid #ababab;
  border-radius: 0.25rem;
  background: #dcdcdc;
`;
const Caret = styled.i`
  width: 0;
  height: 0;
  border: 0.4rem solid transparent;
  border-top: 0.42rem solid ${(p) => (p.$faded ? "#a8a8a8" : "#555")};
  border-bottom: 0;
`;
const CornerCaret = styled(Caret)`
  position: absolute;
  right: 0.1rem;
  bottom: 0.3rem;
  border-width: 0.25rem 0.28rem 0;
`;
const VSep = styled.span`
  flex: none;
  width: 0.85rem;
  height: 2.3rem;
  background: linear-gradient(90deg, transparent 0.36rem, #cfcfcf 0.36rem, #cfcfcf 0.45rem, transparent 0.45rem);
`;
const Space = styled.span`
  flex: none;
  width: ${(p) => u(p.$w)};
`;

const Tool = ({ name, w, size, faded, pressed, corner, h }) => (
  <ToolCell $w={w} $h={h}>
    {pressed ? <Pressed $w={pressed[0]} $h={pressed[1]}><Icon name={name} size={size} /></Pressed> : <Icon name={name} size={size} faded={faded} />}
    {corner && <CornerCaret $faded />}
  </ToolCell>
);
const Drop = ({ faded }) => <ToolCell $w={11.5}><Caret $faded={faded} /></ToolCell>;

const Field = styled.span`
  flex: none;
  display: flex;
  align-items: stretch;
  width: ${(p) => u(p.$w)};
  height: ${(p) => u(p.$h || 20)};
  margin-right: ${(p) => u(p.$gap || 0)};
  border: 0.1rem solid #a9a9a9;
  border-radius: 0.2rem;
  background: #fff;
  color: ${(p) => (p.$hint ? "#8a8a8a" : "#111")};
  font-size: ${(p) => u(p.$font || 11)};
  overflow: hidden;
`;
const FieldText = styled.span`
  flex: 1;
  display: flex;
  align-items: center;
  padding-left: ${(p) => u(p.$pad || 3)};
`;
const Stepper = styled.span`
  width: ${(p) => u(p.$w || 14.5)};
  display: flex;
  flex-direction: column;
  align-items: center;
  justify-content: center;
  gap: 0.34rem;
  border-left: 0.08rem solid #b5b5b5;
  background: #f7f7f7;
  &::before, &::after {
    content: "";
    border: 0.38rem solid transparent;
    border-bottom: 0.42rem solid #555;
    border-top: 0;
  }
  &::after {
    border-bottom: 0;
    border-top: 0.42rem solid #555;
  }
`;
const Combo = styled.span`
  width: 2.05rem;
  display: flex;
  align-items: center;
  justify-content: center;
  background: #f4f4f4;
`;
const RgbLabel = styled.span`
  flex: none;
  display: flex;
  align-items: center;
  gap: 0.7rem;
  width: 5.96rem;
  height: 1.96rem;
  margin: 0 0.13rem 0 0.06rem;
  padding-left: 0.1rem;
  background: #666;
  color: #fff;
  font-size: 1.05rem;
`;
const RadioDot = styled.i`
  width: 1.3rem;
  height: 1.3rem;
  border: 0.32rem solid #555;
  outline: 0.09rem solid #444;
  outline-offset: -0.1rem;
  border-radius: 50%;
  background: #bbb;
`;
const Chevrons = styled.span`
  flex: none;
  width: ${(p) => u(p.$w)};
  padding-bottom: 0.25rem;
  color: #333;
  font-size: 1.7rem;
  line-height: 1;
`;

const PanelHead = styled.div`
  flex: none;
  display: flex;
  align-items: center;
  height: ${(p) => u(p.$h)};
  padding: 0 ${(p) => u(p.$right || 1.2)} 0 ${(p) => u(p.$left || 4.2)};
  font-size: ${(p) => u(p.$font || 11.75)};
`;
const HeadText = styled.span`
  flex: 1;
`;
const DockButton = styled.span`
  display: flex;
  align-items: center;
  justify-content: center;
  width: ${(p) => u(p.$w || 13.2)};
  height: ${(p) => u(p.$w ? p.$w : 13)};
  margin-left: 0.38rem;
  border: 0.11rem solid #777;
  border-radius: 0.25rem;
  background: #f0f0f0;
`;
const FloatMark = ({ w }) => (
  <DockButton $w={w}><Glyph viewBox="0 0 10 10" $size={7.4} $stroke={1.3} $ink="#555"><path d="M1 4H6V9.4H1ZM4 4V1.4H9.2V6.6H6.4" /></Glyph></DockButton>
);
const CloseMark = ({ w }) => (
  <DockButton $w={w}><Glyph viewBox="0 0 10 10" $size={7.4} $stroke={2.4} $ink="#555"><path d="M1 1L9 9M9 1L1 9" /></Glyph></DockButton>
);
const SplitDots = styled.div`
  flex: none;
  display: flex;
  align-items: center;
  justify-content: center;
  height: ${(p) => u(p.$h)};
  &::before {
    content: "";
    width: 1.8rem;
    height: 0.2rem;
    background-image: radial-gradient(circle, #aaa 0.055rem, transparent 0.07rem);
    background-size: 0.3rem 0.2rem;
  }
`;

const ArrowHead = styled.i`
  flex: none;
  border: 0.42rem solid transparent;
  ${(p) => p.$dir === "up" && css`border-top: 0; border-bottom: 0.55rem solid #555;`}
  ${(p) => p.$dir === "down" && css`border-bottom: 0; border-top: 0.55rem solid #555;`}
  ${(p) => p.$dir === "left" && css`border-left: 0; border-right: 0.48rem solid #555;`}
  ${(p) => p.$dir === "right" && css`border-width: 0.36rem 0; border-left: 0.42rem solid #555;`}
`;
const ScrollTrack = styled.div`
  flex: none;
  display: flex;
  flex-direction: ${(p) => (p.$across ? "row" : "column")};
  ${(p) => (p.$across ? "height" : "width")}: ${(p) => u(p.$size)};
  background: linear-gradient(${(p) => (p.$across ? "180deg" : "90deg")}, #f1f1f1, #fff 60%);
  border-${(p) => (p.$across ? "top" : "left")}: 0.08rem solid ${(p) => (p.$edge ? "#bdbdbd" : "#ececec")};
`;
const ScrollEnd = styled.span`
  flex: none;
  flex-basis: ${(p) => u(p.$len || 16)};
  display: flex;
  align-items: center;
  justify-content: center;
  background: #fafafa;
  border: 0 solid #b9b9b9;
  border-width: ${(p) => p.$line};
`;
const ScrollGap = styled.span`
  flex: ${(p) => (p.$len ? `0 0 ${u(p.$len)}` : "1")};
`;
const ScrollThumb = styled.span`
  flex: ${(p) => (p.$len ? `0 0 ${u(p.$len)}` : "1")};
  background: #e5e5e5;
  border: 0.09rem solid #c2c2c2;
`;

const CheckBox = styled.span`
  flex: none;
  display: flex;
  align-items: center;
  justify-content: center;
  width: 1.42rem;
  height: 1.42rem;
  border: 0.1rem solid #b4b4b4;
  background: #fff;
`;
const Checked = () => (
  <CheckBox><Glyph viewBox="0 0 10 10" $size={9.5} $stroke={1.9}><path d="M1.6 4.6L4.2 8.6L8.4 .8" /></Glyph></CheckBox>
);

/* ------------------------------------------------------------------ */
/* Left docks                                                          */
/* ------------------------------------------------------------------ */

const Workspace = styled.div`
  flex: 1;
  display: flex;
  min-height: 0;
  background: #efefef;
`;
const LeftDock = styled.aside`
  flex: none;
  display: flex;
  flex-direction: column;
  width: 36.7rem;
`;
const DockTools = styled.div`
  flex: none;
  display: flex;
  align-items: center;
  height: ${(p) => u(p.$h)};
  padding: 0 0 ${(p) => u(p.$drop)} 0.35rem;
`;
const TreeBox = styled.div`
  flex: none;
  height: ${(p) => u(p.$h)};
  padding-top: 0.08rem;
  overflow: hidden;
  border-top: 0.08rem solid #b2b2b2;
  border-left: 0.1rem solid #b2b2b2;
  background: #fff;
`;
const TreeRow = styled.div`
  display: flex;
  align-items: center;
  height: 1.835rem;
  font-size: 1.18rem;
`;
const Twist = styled.span`
  display: flex;
  flex: none;
  width: ${(p) => u(p.$w || 20)};
  padding-left: ${(p) => u(p.$pad || 5.6)};
`;
const RowLabel = styled.span`
  padding-left: 0.7rem;
`;
const LayerName = styled.b`
  padding-left: 0.6rem;
  font-size: 1.2rem;
  text-decoration: ${(p) => (p.$active ? "underline" : "none")};
  text-decoration-thickness: 0.09rem;
  text-underline-offset: 0.2rem;
`;
const LayerMark = styled.span`
  flex: none;
  display: flex;
  align-items: center;
  justify-content: center;
  width: 1.65rem;
  height: 1.6rem;
  margin-left: 0.6rem;
  ${(p) => p.$fill && css`background: ${p.$fill}; border: 0.09rem solid #333;`}
`;
const VertexHelp = styled.div`
  padding: 6.65rem 0 0 0.9rem;
  font-size: 0.998rem;
  line-height: 1.33rem;
  color: #000;
`;
const HelpPara = styled.p`
  margin: 0 0 1.36rem;
`;

const BROWSER_ROWS = [
  ["star", "Favorites", false],
  ["bookmark", "Spatial Bookmarks", true],
  ["projectHome", "Project Home", true],
  ["homeFolder", "Home", true],
  ["folder", "C:\\ (Windows)", true],
  ["folder", "D:\\ (Data)", true],
  ["folder", "E:\\ (Endi)", true],
  ["drive", "", false],
];

const LeftPanels = () => (
  <LeftDock>
    <PanelHead $h={25}>Browser</PanelHead>
    <DockTools $h={27.7} $drop={5.5}>
      {["addLayer", "refresh", "funnel", "collapse", "info"].map((n) => <Tool key={n} name={n} w={25.7} h={22} size={15.4} />)}
    </DockTools>
    <TreeBox $h={132.7}>
      {BROWSER_ROWS.map(([icon, label, open], i) => (
        <TreeRow key={i}>
          <Twist>{open && <ArrowHead $dir="right" />}</Twist>
          <Icon name={icon} size={15} />
          <RowLabel>{label}</RowLabel>
        </TreeRow>
      ))}
    </TreeBox>
    <SplitDots $h={6.6} />
    <PanelHead $h={21}>Layers</PanelHead>
    <DockTools $h={32} $drop={3.4}>
      {["brush", "group", "eye", "funnelMenu"].map((n) => <Tool key={n} name={n} w={26} h={22} size={15.4} />)}
      <Tool name="epsilon" w={24} h={22} size={15} faded />
      <ToolCell $w={11} $h={22}><Caret $faded /></ToolCell>
      <Tool name="expand" w={27.5} h={22} size={15.4} />
      <Tool name="collapse" w={25.4} h={22} size={15.4} />
      <Tool name="removeLayer" w={24.8} h={22} size={15.4} />
    </DockTools>
    <TreeBox $h={196.5}>
      <TreeRow>
        <Twist $w={23.6} />
        <Checked />
        <LayerMark $fill="#bccf50" />
        <LayerName $active>ObservedEvent_UTM</LayerName>
      </TreeRow>
      <TreeRow>
        <Twist $w={23.6} $pad={7.6}><ArrowHead $dir="right" /></Twist>
        <Checked />
        <LayerMark><Icon name="raster" size={13.6} /></LayerMark>
        <LayerName>LC_UTM_Clipped</LayerName>
      </TreeRow>
    </TreeBox>
    <ScrollTrack $across $size={14.2} $edge>
      <ScrollEnd $len={14} $line="0 0.08rem 0 0"><ArrowHead $dir="left" /></ScrollEnd>
      <ScrollGap />
    </ScrollTrack>
    <SplitDots $h={7} />
    <PanelHead $h={21.2}>Vertex Editor</PanelHead>
    <VertexHelp>
      <HelpPara>Right click on an editable feature to show its table of vertices.</HelpPara>
      <HelpPara>
        When a feature is bound to this panel, dragging a rectangle to select
        <br />
        vertices on the canvas will only select those of the bound feature.
      </HelpPara>
    </VertexHelp>
  </LeftDock>
);

/* ------------------------------------------------------------------ */
/* Map                                                                 */
/* ------------------------------------------------------------------ */

/* The map is digitised on two overlapping sheets with their own grids. */
const SHEETS = {
  n: ([x, y]) => [1119 + x * 0.28636, 171.05 + y * 0.18636],
  s: ([x, y]) => [1119 + x * 0.28636, 427.6 + y * 0.26045],
};
const parse = (sheet, str) => str.split(" ").map((p) => SHEETS[sheet](p.split(",").map(Number)));
const toPoints = (pts) => pts.map((p) => p.map((v) => v.toFixed(1)).join(",")).join(" ");

const OUTLINE = [[1141.9, 185.2], [1266.8, 183.7], [1290, 232.2], [1391.9, 285.7], [1437.4, 362.1], [1487, 482.3], [1562.3, 641.2], [1444.9, 664.1], [1372.4, 581.8], [1358.1, 524], [1321.2, 445.8], [1273.6, 408.7], [1168.5, 309.3]];

const PATCHES = [
  ["n", "#80ff00", "258,78 305,78 287,110 292,150 280,180 285,210 272,222 258,208 250,170 246,120"],
  ["n", "#80ff00", "335,180 348,215 330,280 325,345 310,360 318,420 334,460 336,500 330,520 345,570 372,600 340,580 318,530 312,400 300,370 308,290 330,240"],
  ["n", "#a6f200", "125,360 145,372 150,400 148,425 160,445 135,440"],
  ["n", "#a6f200", "150,455 200,490 195,518 178,510"],
  ["n", "#a6f200", "250,545 285,535 290,570 262,572"],
  ["n", "#ffe64d", "283,762 305,745 345,765 380,780 375,835 340,830 325,790 285,795"],
  ["n", "#ffe64d", "400,775 430,765 475,778 480,805 440,830 405,800"],
  ["n", "#ffe64d", "552,655 565,630 590,605 615,625 640,630 665,620 690,618 688,660 640,665 600,690 560,680"],
  ["n", "#ffe64d", "572,690 592,690 582,730 568,730"],
  ["n", "#ffe64d", "1014,1100 1026,1040 1045,1010 1070,1030 1068,1060 1050,1098"],
  ["n", "#ffe64d", "440,1000 480,995 485,1030 460,1045"],
  ["n", "#ffe64d", "545,840 580,850 570,895 545,880"],
  ["n", "#ffe64d", "550,1035 600,1045 590,1065 560,1060"],
  ["n", "#ffffa8", "592,772 625,750 648,756 648,775 620,778 598,783"],
  ["n", "#ffffa8", "895,945 900,905 952,902 950,925 935,945 918,980 908,950"],
  ["n", "#ffffa8", "925,1005 950,980 975,1005 972,1022 940,1025"],
  ["n", "#ffffa8", "1034,850 1050,890 1032,892"],
  ["n", "#ffffa8", "455,665 480,680 498,715 485,725 465,700"],
  ["n", "#ffffa8", "510,890 545,910 575,945 570,970 545,965 525,935"],
  ["n", "#ff0000", "200,118 208,115 216,120 222,145 232,150 232,160 215,162 214,172 209,174 206,150 197,142 204,132"],
  ["n", "#ff0000", "198,310 206,314 218,310 222,322 234,322 240,333 225,334 220,340 200,340"],
  ["n", "#ff0000", "435,430 448,428 452,412 470,410 480,398 482,408 484,430 497,434 502,440 508,446 492,450 500,472 485,466 470,465 448,475 436,478"],
  ["n", "#ff0000", "580,348 600,345 622,362 618,378 612,378 615,366 604,353"],
  ["n", "#ff0000", "424,72 432,72 430,97"],
  ["n", "#ff0000", "588,630 600,624 605,640 640,638 662,640 660,665 640,668 630,690 622,690 615,706 590,695 595,665 588,650"],
  ["n", "#ff0000", "885,656 898,650 905,640 915,642 930,636 932,655 915,662 905,672 890,668"],
  ["n", "#ff0000", "288,890 330,888 356,878 330,850 330,832 310,830 318,788 334,795 345,808 345,835 372,838 400,828 400,812 380,800 420,805 432,838 445,850 484,885 480,900 468,905 470,935 455,965 425,972 410,998 360,990 335,965 320,935"],
  ["n", "#ff0000", "508,1030 520,1018 540,1025 556,1042 575,1058 565,1068 550,1068 545,1078 520,1078"],
  ["n", "#ff0000", "460,970 480,980 475,992 458,988"],
  ["n", "#ff0000", "950,1010 956,1022 968,1025 962,1045 958,1065 970,1082 995,1090 995,1103 950,1105 940,1070 920,1058 932,1044"],
  ["n", "#ff0000", "658,1224 676,1215 684,1198 690,1214 702,1220 706,1232 700,1240 675,1238"],
  ["n", "#ff0000", "676,1360 700,1356 712,1345 722,1335 730,1345 755,1342 762,1368 770,1380 760,1388 750,1372 738,1370 728,1378 715,1378 708,1395 698,1418 682,1412 686,1390 678,1382"],
  ["n", "#ff0000", "1150,1440 1162,1440 1168,1428 1178,1440 1190,1445 1190,1462 1198,1487 1184,1474 1165,1478 1160,1455"],
  ["n", "#ff0000", "215,590 235,615 265,645 292,655 285,678 262,672"],
  ["n", "#c80000", "735,550 741,560 740,590 725,628 705,605 680,620 680,605 690,585 712,580"],
  ["n", "#e6004d", "402,868 415,860 430,868 445,875 443,900 455,930 440,925 430,912 408,908"],
  ["n", "#cc4df2", "205,588 240,640 245,665 270,680 310,738 292,742 260,705 245,680 245,668 225,650 225,635"],
  ["n", "#cc4df2", "440,840 488,812 484,882"],
  ["n", "#cc4df2", "262,858 305,855 305,842 318,838 333,850 330,872 356,878 320,888 280,882"],
  ["n", "#cc4df2", "412,975 435,978 455,960 460,980 462,1000 445,1010 440,1025 455,1040 425,1042 425,1005"],
  ["n", "#cc4df2", "475,985 498,990 495,1025 480,1015"],
  ["n", "#cc4df2", "566,1135 578,1135 580,1150 576,1160 588,1180 600,1205 588,1215 578,1200 572,1170"],
  ["n", "#cc4df2", "760,478 777,482 765,500"],
  ["n", "#e6cce6", "352,990 420,1000 395,1025"],
  ["n", "#e6cc4d", "720,1060 780,1085 830,1060 870,1065 915,1120 900,1150 860,1090 800,1110 750,1095"],
  ["n", "#e6cc4d", "980,1195 1020,1215 1040,1290 1000,1280 960,1250"],
  ["n", "#e6cc4d", "402,690 430,700 450,740 415,730"],
  ["n", "#ffffa8", "930,1405 1015,1400 1005,1425 960,1435"],
  ["n", "#e6cc4d", "940,1388 1005,1385 1015,1402 935,1410"],
  ["n", "#ffffa8", "930,1495 985,1485 1000,1450 975,1455 950,1490"],
  ["n", "#80ff00", "665,1035 700,1025 720,1050 680,1060"],
  ["n", "#80ff00", "970,1295 1005,1290 1008,1365 962,1360"],
  ["n", "#80ff00", "980,1555 995,1515 1020,1495 1005,1550"],
  ["n", "#a6f200", "840,1105 870,1105 885,1140 860,1130"],
  ["n", "#a6f200", "875,1155 900,1165 895,1187 882,1182"],
  ["s", "#e6cc4d", "925,100 990,95 985,130 935,130"],
  ["s", "#e6cc4d", "900,180 950,170 940,215 975,255 930,240 900,215"],
  ["s", "#ffffa8", "955,185 995,180 998,225 965,240 945,215"],
  ["s", "#e6cc4d", "960,140 1005,140 1008,160 970,170"],
  ["s", "#ffffa8", "1095,345 1130,345 1140,375 1150,380 1125,400 1110,430 1050,450 1015,430 1050,395 1060,370 1095,370"],
  ["s", "#e6cc4d", "1020,300 1040,340 1042,390 1012,390 1025,350 1010,325"],
  ["s", "#80ff00", "1000,405 1035,395 1042,405 1005,430"],
  ["s", "#ffe64d", "785,185 845,180 840,230 815,245 795,240"],
  ["s", "#ff0000", "788,208 800,204 815,193 825,200 842,197 840,215 830,220 823,238 818,222 792,214"],
  ["s", "#ff0000", "850,372 865,355 880,352 885,342 908,342 915,350 905,360 908,374 880,368"],
  ["s", "#ff0000", "1070,238 1090,232 1100,240 1113,246 1112,256 1098,254 1088,246 1074,246"],
  ["s", "#ff0000", "1198,455 1222,456 1238,448 1230,428 1240,425 1250,432 1262,424 1268,410 1280,407 1281,422 1268,436 1274,452 1284,468 1284,478 1270,472 1245,470 1228,460 1200,459"],
  ["s", "#ff0000", "1308,382 1314,366 1330,352 1345,365 1325,382"],
  ["s", "#ffffa8", "872,520 885,505 910,488 940,505 960,510 945,530 915,528 895,542"],
  ["s", "#ff0000", "875,522 892,515 905,500 912,512 928,515 912,520 900,528 885,522 878,530"],
  ["s", "#80ff00", "1070,480 1110,470 1150,475 1150,550 1090,555 1060,530 1085,510"],
  ["s", "#a6f200", "1060,455 1100,430 1150,470 1100,490"],
  ["s", "#ffffa8", "1085,492 1145,490 1125,525 1100,515"],
  ["s", "#ffffa8", "1010,460 1040,475 1065,505 1045,545 1030,500"],
  ["s", "#e6cc4d", "1060,565 1090,550 1150,560 1200,555 1230,600 1240,640 1290,690 1240,690 1200,650 1160,620 1130,600 1080,600"],
  ["s", "#ffffa8", "1120,585 1195,568 1150,590 1115,600"],
  ["s", "#a6f200", "930,615 970,600 1050,598 1100,610 1145,640 1140,660 1100,655 1060,630 1000,612"],
  ["s", "#80ff00", "1105,600 1170,610 1200,650 1215,680 1160,665 1150,640 1110,612"],
  ["s", "#a6f200", "1150,660 1200,650 1240,690 1290,695 1330,715 1355,735 1330,760 1335,790 1290,770 1240,790 1222,735 1190,680"],
  ["s", "#e6cc4d", "920,560 965,545 975,570 970,598 930,600"],
  ["s", "#e6cc4d", "925,630 950,630 945,645 930,648"],
  ["s", "#ffffa8", "945,650 1020,645 1040,690 1050,730 1020,750 985,710 960,670"],
  ["s", "#80ff00", "940,640 1010,620 1055,640 1090,665 1085,700 1070,730 1030,715 1035,680 1010,650"],
  ["s", "#ffffa8", "1095,680 1140,680 1155,710 1140,730 1095,725"],
  ["s", "#80ff00", "1155,700 1190,740 1215,790 1205,815 1180,812 1160,770"],
  ["s", "#e6cc4d", "1040,740 1095,730 1070,752"],
  ["s", "#ffffa8", "1072,785 1130,755 1165,790 1170,815 1210,810 1230,800 1265,845 1270,872 1165,895 1125,845 1085,830"],
  ["s", "#e6e600", "1120,842 1145,860 1165,892 1138,905 1115,875"],
  ["s", "#80ff00", "1230,800 1290,820 1300,865 1265,870 1255,830"],
  ["s", "#e6cc4d", "1262,790 1290,768 1330,790 1372,840 1368,852 1330,858 1310,810"],
  ["s", "#80ff00", "1328,745 1370,740 1366,762 1392,768 1378,785 1388,810 1358,835 1340,832 1335,780"],
  ["s", "#a6f200", "1368,830 1385,822 1402,842 1372,850"],
  ["s", "#e6cc4d", "1300,685 1345,685 1355,705 1345,730 1310,710"],
  ["s", "#80ff00", "1242,655 1255,648 1295,665 1275,680 1250,672"],
  ["s", "#80ff00", "1255,575 1280,560 1270,530 1302,548 1300,565 1275,577"],
  ["s", "#ff0000", "1370,715 1384,708 1376,692 1390,692 1400,702 1422,692 1420,702 1426,708 1415,722 1398,716 1376,726"],
  ["s", "#ff0000", "950,662 970,664 992,660 982,675 990,680 975,695 955,680"],
  ["s", "#ff0000", "1175,850 1188,845 1195,834 1200,846 1212,850 1206,862 1182,858"],
  ["s", "#ff2020", "1018,524 1040,522 1032,543"],
  ["s", "#e6cc4d", "1465,792 1475,780 1495,785 1520,766 1525,780 1505,795 1470,797"],
  ["s", "#e6cc4d", "1228,118 1240,125 1252,120 1250,155 1240,150"],
  ["s", "#dcdce6", "1225,740 1250,765 1230,768"],
];

const RIVERS = [
  [["n", 311, 74, 11], ["n", 310, 130, 13], ["n", 308, 185, 13.5], ["n", 300, 235, 16], ["n", 294, 285, 9.5], ["n", 286, 350, 7], ["n", 288, 390, 7.5], ["n", 297, 430, 12], ["n", 296, 475, 10.5], ["n", 300, 510, 11], ["n", 305, 550, 10], ["n", 335, 590, 9.5], ["n", 375, 620, 10], ["n", 410, 660, 9.5], ["n", 435, 700, 8], ["n", 465, 740, 7], ["n", 490, 780, 7], ["n", 505, 820, 5], ["n", 498, 870, 4.6], ["n", 493, 920, 4], ["n", 500, 970, 3.6], ["n", 520, 1005, 3.4], ["n", 570, 1022, 4], ["n", 630, 1045, 6.4], ["n", 680, 1072, 7], ["n", 725, 1090, 5], ["n", 760, 1112, 6.6], ["n", 795, 1122, 4], ["n", 820, 1095, 2.2], ["n", 845, 1084, 2], ["n", 868, 1100, 2], ["n", 888, 1140, 2.6], ["n", 915, 1160, 5], ["n", 932, 1182, 11], ["n", 962, 1200, 8], ["n", 985, 1240, 4], ["n", 1008, 1280, 2.6], ["n", 1015, 1330, 2], ["n", 1012, 1372, 2], ["n", 975, 1385, 2], ["n", 940, 1390, 2], ["n", 932, 1410, 2], ["n", 950, 1436, 2], ["n", 1000, 1444, 2], ["n", 1008, 1470, 2.4], ["n", 985, 1506, 2.4], ["n", 930, 1500, 3], ["n", 923, 1535, 2.6], ["n", 945, 1560, 2], ["s", 1000, 136, 3], ["s", 1014, 150, 3.4], ["s", 985, 174, 2.2], ["s", 920, 172, 1.8], ["s", 895, 190, 2.2], ["s", 908, 222, 2.2], ["s", 950, 252, 2], ["s", 1000, 272, 2.4], ["s", 1025, 298, 2.4], ["s", 1042, 345, 2.4], ["s", 1045, 390, 2.6], ["s", 1008, 432, 2.4], ["s", 1040, 460, 2.4], ["s", 1075, 500, 2.6], ["s", 1048, 552, 2.6], ["s", 1055, 590, 2.6], ["s", 1095, 612, 3], ["s", 1145, 632, 3.6], ["s", 1152, 652, 3.6], ["s", 1145, 672, 4]],
  [["s", 888, 575, 3.6], ["s", 915, 618, 2.6], ["s", 1000, 614, 4], ["s", 1050, 636, 3.6], ["s", 1100, 665, 3.6], ["s", 1145, 675, 4], ["s", 1180, 690, 8], ["s", 1203, 720, 12], ["s", 1214, 755, 8], ["s", 1250, 796, 5], ["s", 1290, 812, 7], ["s", 1315, 832, 9], ["s", 1330, 868, 6]],
];

const SIDE_STREAMS = [
  ["n", "133,452 160,462 185,480 205,500 225,525 260,525 290,535"],
  ["n", "128,372 145,390 145,410 135,425"],
  ["n", "270,345 262,330 245,328"],
  ["n", "648,890 650,1040 655,1130"],
  ["n", "640,875 690,915 740,950 780,990"],
  ["n", "545,720 520,700 500,712"],
];

/* Field fragments: [sheet, centre x, centre y, half width, half height, count] */
const FRAGMENTS = [
  ["n", 362, 100, 28, 24, 26], ["n", 366, 145, 28, 30, 40], ["n", 370, 205, 22, 34, 46], ["n", 395, 262, 14, 20, 12],
  ["n", 338, 300, 12, 40, 18], ["n", 338, 385, 14, 24, 20], ["n", 336, 445, 12, 28, 16], ["n", 355, 535, 14, 22, 12],
  ["n", 262, 335, 14, 20, 8], ["n", 215, 515, 18, 30, 18], ["n", 235, 548, 26, 22, 40], ["n", 275, 590, 36, 26, 40], ["n", 350, 645, 24, 16, 8],
  ["n", 440, 650, 46, 44, 60], ["n", 515, 690, 36, 50, 42], ["n", 430, 730, 24, 22, 14], ["n", 485, 735, 24, 30, 20], ["n", 575, 770, 22, 48, 30],
  ["n", 535, 840, 22, 60, 90], ["n", 500, 800, 50, 20, 16], ["n", 600, 880, 56, 30, 40], ["n", 525, 940, 40, 50, 100], ["n", 482, 940, 14, 70, 44], ["n", 580, 990, 46, 34, 50],
  ["n", 690, 930, 60, 40, 36], ["n", 770, 965, 56, 34, 16], ["n", 840, 1020, 56, 44, 66], ["n", 690, 1040, 50, 30, 40], ["n", 620, 1090, 50, 34, 50], ["n", 750, 1060, 80, 40, 50],
  ["n", 745, 1150, 90, 34, 66], ["n", 880, 1085, 56, 44, 80], ["n", 850, 1150, 50, 40, 36], ["n", 840, 1210, 60, 34, 30], ["n", 900, 1260, 50, 50, 20],
  ["n", 1005, 1225, 36, 40, 70], ["n", 975, 1270, 36, 34, 40], ["n", 1030, 1310, 24, 60, 40], ["n", 910, 1330, 30, 50, 34], ["n", 1060, 1370, 36, 60, 50], ["n", 985, 1370, 34, 20, 30],
  ["n", 900, 1430, 34, 60, 50], ["n", 1050, 1440, 44, 70, 66], ["n", 970, 1410, 50, 24, 30], ["n", 985, 1470, 26, 28, 40], ["n", 900, 1530, 34, 40, 50], ["n", 955, 1535, 32, 24, 40], ["n", 1045, 1530, 44, 40, 44],
  ["s", 900, 150, 32, 34, 40], ["s", 1050, 140, 34, 40, 26], ["s", 960, 200, 36, 34, 40], ["s", 980, 155, 36, 18, 30], ["s", 890, 270, 30, 34, 30], ["s", 940, 290, 60, 30, 60],
  ["s", 1020, 280, 60, 26, 30], ["s", 980, 350, 60, 40, 76], ["s", 900, 330, 36, 50, 26], ["s", 1070, 340, 40, 60, 50], ["s", 1140, 300, 36, 24, 16], ["s", 930, 410, 44, 34, 76], ["s", 990, 440, 56, 44, 70],
  ["s", 1080, 400, 50, 44, 44], ["s", 1170, 380, 26, 60, 40], ["s", 1100, 450, 56, 36, 40], ["s", 1180, 480, 30, 60, 46], ["s", 980, 520, 36, 60, 46], ["s", 1020, 540, 36, 50, 30], ["s", 1130, 530, 70, 44, 66], ["s", 1180, 570, 50, 44, 44], ["s", 1215, 605, 26, 26, 44],
  ["s", 1085, 590, 40, 18, 16], ["s", 1045, 645, 30, 14, 16], ["s", 1120, 705, 44, 30, 60], ["s", 1150, 745, 34, 12, 8], ["s", 1238, 845, 34, 34, 46], ["s", 1310, 820, 20, 20, 8], ["s", 1190, 650, 30, 30, 6],
];

const random = (seed) => () => {
  seed = (seed * 1664525 + 1013904223) % 4294967296;
  return seed / 4294967296;
};

const buildFragments = () => {
  const rnd = random(20247);
  const out = [];
  FRAGMENTS.forEach(([sheet, cx, cy, rx, ry, n]) => {
    for (let i = 0; i < n; i++) {
      const a = rnd() * Math.PI * 2;
      const r = Math.sqrt(rnd()) * 1.08;
      const [x, y] = SHEETS[sheet]([cx + Math.cos(a) * r * rx, cy + Math.sin(a) * r * ry]);
      const dir = rnd() * Math.PI;
      const len = rnd() < 0.5 ? 0.3 : 0.7 + rnd() * 2.3;
      const bend = dir + (rnd() - 0.5) * 2.4;
      const x1 = x + Math.cos(dir) * len;
      const y1 = y + Math.sin(dir) * len;
      out.push(`M${x.toFixed(1)} ${y.toFixed(1)}L${x1.toFixed(1)} ${y1.toFixed(1)}L${(x1 + Math.cos(bend) * len * 0.6).toFixed(1)} ${(y1 + Math.sin(bend) * len * 0.6).toFixed(1)}`);
    }
  });
  return out;
};

const catmull = (a, b, c, d, t) => 0.5 * (2 * b + (c - a) * t + (2 * a - 5 * b + 4 * c - d) * t * t + (3 * b - a - 3 * c + d) * t * t * t);
const buildRiver = (nodes) => {
  const pts = nodes.map(([s, x, y, w]) => [...SHEETS[s]([x, y]), w]);
  const samples = [];
  for (let i = 0; i < pts.length - 1; i++) {
    const q = [pts[Math.max(0, i - 1)], pts[i], pts[i + 1], pts[Math.min(pts.length - 1, i + 2)]];
    for (let t = 0; t < 8; t++) samples.push([0, 1, 2].map((k) => catmull(q[0][k], q[1][k], q[2][k], q[3][k], t / 8)));
  }
  samples.push(pts[pts.length - 1]);
  return samples;
};

const River = ({ nodes, grow, color }) => {
  const s = buildRiver(nodes);
  return (
    <g stroke={color} strokeLinecap="round">
      {s.slice(1).map((p, i) => (
        <line key={i} x1={s[i][0].toFixed(2)} y1={s[i][1].toFixed(2)} x2={p[0].toFixed(2)} y2={p[1].toFixed(2)} strokeWidth={(Math.max(1.2, p[2]) + grow).toFixed(2)} />
      ))}
    </g>
  );
};

const CanvasSvg = styled.svg`
  display: block;
  width: 44.6rem;
  height: 50.65rem;
`;

const FloodMap = () => {
  const fragments = buildFragments();
  return (
    <CanvasSvg viewBox="1122 168.5 446 506.5">
      <clipPath id="aoi"><polygon points={toPoints(OUTLINE)} /></clipPath>
      <g clipPath="url(#aoi)">
        <polygon points={toPoints(OUTLINE)} fill="#e6e600" />
        {PATCHES.map(([sheet, fill, pts], i) => <polygon key={i} points={toPoints(parse(sheet, pts))} fill={fill} />)}
        <g fill="none" stroke="#232323" strokeWidth="1.5">
          {SIDE_STREAMS.map(([sheet, pts], i) => <polyline key={i} points={toPoints(parse(sheet, pts))} />)}
        </g>
        <path d={fragments.join("")} fill="none" stroke="#232323" strokeWidth="1.4" strokeLinecap="round" strokeLinejoin="round" />
        <g fill="#7fb5b0" stroke="#232323" strokeWidth=".6">
          <polygon points={toPoints(parse("s", "1113,293 1142,292 1145,312 1118,312"))} />
          <polygon points={toPoints(parse("n", "232,540 255,535 258,552 238,555"))} />
          <polygon points={toPoints(parse("n", "612,1062 632,1065 628,1082 612,1080"))} />
          <polygon points={toPoints(parse("n", "762,1000 778,992 782,1005 766,1012"))} fill="#c8dcc0" />
          <polygon points={toPoints(parse("n", "908,1205 920,1205 916,1230 910,1228"))} fill="#b4d0b4" />
          <polygon points={toPoints(parse("s", "1072,455 1092,455 1088,475 1068,472"))} fill="#4a90b8" />
          <polygon points={toPoints(parse("s", "978,205 998,200 996,222 985,220"))} />
          <polygon points={toPoints(parse("n", "525,1000 600,990 615,1010 560,1012"))} fill="#1f78b4" />
        </g>
        <polygon points={toPoints(parse("s", "898,180 912,180 900,200 895,195"))} fill="#00ccf2" />
        {RIVERS.map((r, i) => <River key={i} nodes={r} grow={1.3} color="#1d2b36" />)}
        {RIVERS.map((r, i) => <River key={i} nodes={r} grow={0} color="#1f78b4" />)}
        <g fill="#232323">
          <circle cx="1339.6" cy="271.6" r="1.3" /><circle cx="1468.8" cy="493.5" r="1.6" /><circle cx="1485" cy="559" r="1" /><circle cx="1539.6" cy="621.8" r="1" /><circle cx="1533.6" cy="639" r="1" /><circle cx="1508.4" cy="601.6" r="1.4" /><circle cx="1510.6" cy="606" r="1.1" />
        </g>
        <path d="M1481 610L1484 606.4L1488 605" stroke="#232323" strokeWidth="1.3" fill="none" />
      </g>
      <polygon points={toPoints(OUTLINE)} fill="none" stroke="#e31a1c" strokeWidth="3.7" strokeLinejoin="round" />
    </CanvasSvg>
  );
};

const MainColumn = styled.main`
  flex: 1;
  display: flex;
  flex-direction: column;
  min-width: 0;
`;
const MapCanvas = styled.section`
  flex: none;
  display: flex;
  justify-content: flex-end;
  height: 50.65rem;
  background: #fff;
`;
const BottomPanel = styled.section`
  flex: 1;
  display: flex;
  flex-direction: column;
  padding: 0 0.25rem 0.05rem 0;
  border-top: 0.08rem solid #b4b4b4;
`;
const BottomHead = styled.div`
  display: flex;
  justify-content: flex-end;
  height: 5.6rem;
  padding-top: 1.1rem;
`;
const LogBox = styled.div`
  flex: 1;
  display: flex;
  justify-content: flex-end;
  border: 0.1rem solid #ababab;
  border-left: 0;
  background: #fff;
`;

/* ------------------------------------------------------------------ */
/* Status bar                                                          */
/* ------------------------------------------------------------------ */

const StatusBar = styled.footer`
  flex: none;
  display: flex;
  align-items: center;
  height: 2.8rem;
  padding: 0.5rem 0 0 0.45rem;
  background: #efefef;
  font-size: 1.1rem;
`;
const StatusText = styled.span`
  flex: none;
  width: ${(p) => u(p.$w)};
`;
const BubbleButton = styled.span`
  flex: none;
  display: flex;
  align-items: center;
  justify-content: center;
  width: 2.5rem;
  height: 2.4rem;
  border: 0.1rem solid #ababab;
  border-radius: 0.25rem;
  background: #dcdcdc;
`;

const Status = () => (
  <StatusBar>
    <Field $w={203.6} $h={22} $font={10.6} $hint>
      <ToolCell $w={29} $h={20}><Icon name="search" size={13} /></ToolCell>
      <FieldText $pad={0.4}>Type to locate (Ctrl+K)</FieldText>
    </Field>
    <Space $w={548.9} />
    <StatusText $w={59}>Coordinate</StatusText>
    <Field $w={104} $h={19}><FieldText>45,4396° 7,8754°</FieldText></Field>
    <ToolCell $w={34} $h={20}><Icon name="coordToggle" size={13} /></ToolCell>
    <StatusText $w={30}>Scale</StatusText>
    <Field $w={88} $h={19}><FieldText>1:153960</FieldText><Combo><Caret /></Combo></Field>
    <ToolCell $w={24} $h={20}><Icon name="lock" size={14} /></ToolCell>
    <StatusText $w={49.4}>Magnifier</StatusText>
    <Field $w={82} $h={19.4} $gap={9.6}><FieldText $pad={4}>100%</FieldText><Stepper /></Field>
    <StatusText $w={51}>Rotation</StatusText>
    <Field $w={82} $h={19.4} $gap={6.4}><FieldText $pad={4}>0,0 °</FieldText><Stepper /></Field>
    <Checked />
    <Space $w={5.4} />
    <StatusText $w={51.2}>Render</StatusText>
    <Icon name="crs" size={15.4} />
    <Space $w={2.4} />
    <StatusText $w={74.2}>EPSG:4326</StatusText>
    <BubbleButton><Icon name="bubble" size={17} /></BubbleButton>
  </StatusBar>
);

/* ------------------------------------------------------------------ */
/* Processing menu                                                     */
/* ------------------------------------------------------------------ */

const MenuPopup = styled.div`
  position: absolute;
  left: 63.24rem;
  top: 5.04rem;
  width: 28.64rem;
  height: 8rem;
  border: 0.1rem solid #999;
  border-top-width: 0.15rem;
  background: #fff;
  box-shadow: 0.2rem 0.2rem 0.2rem rgba(0, 0, 0, 0.5);
`;
const PopupRow = styled.div`
  display: flex;
  align-items: center;
  height: 2.455rem;
  padding: 0 1.6rem 0.16rem 0.78rem;
  font-size: 1.2rem;
  color: ${(p) => (p.$active ? "#fff" : "#111")};
  background: ${(p) => (p.$active ? "#0078d7" : "transparent")};
`;
const PopupLabel = styled.span`
  flex: 1;
  padding-left: 0.45rem;
`;
const PopupIcon = styled.span`
  flex: none;
  display: flex;
  justify-content: center;
  width: 1.52rem;
`;
const Shortcut = styled.span`
  width: 5.82rem;
  letter-spacing: 0.035rem;
`;

/* ------------------------------------------------------------------ */
/* Model Designer                                                      */
/* ------------------------------------------------------------------ */

const DesignerWindow = styled.section`
  position: absolute;
  left: 30.09rem;
  top: 12.4rem;
  width: 82.1rem;
  height: 70.07rem;
  display: flex;
  flex-direction: column;
  border: 0.25rem solid ${RED};
  background: #efefef;
  box-shadow: 0 -0.12rem 0 #f0f0f2, 0 -0.2rem 0 #a8a8a8;
`;
const DesignerBody = styled.div`
  flex: 1;
  display: flex;
  min-height: 0;
`;
const DesignerSide = styled.aside`
  flex: none;
  display: flex;
  flex-direction: column;
  width: 31.15rem;
  padding-top: 0.07rem;
`;
const ParamTree = styled.div`
  flex: none;
  display: flex;
  height: 8.13rem;
  border-bottom: 0.09rem solid #b0b0b0;
  background: #fff;
`;
const ParamList = styled.div`
  flex: 1;
`;
const ParamRow = styled.div`
  display: flex;
  align-items: center;
  gap: ${(p) => (p.$head ? "1.15rem" : "0.8rem")};
  height: ${(p) => (p.$head ? "1.95rem" : "2.14rem")};
  padding-left: ${(p) => (p.$head ? "0.75rem" : "5.15rem")};
  background: ${(p) => (p.$alt ? "#e8e6e1" : "#fff")};
  font-size: 1.405rem;
`;
const ButtonRow = styled.div`
  flex: none;
  height: 4.1rem;
  padding: 0.85rem 0 0 0.63rem;
`;
const PushButton = styled.button`
  width: 13.3rem;
  height: 2.43rem;
  padding: 0;
  border: 0.1rem solid #a9a9a9;
  border-radius: 0.25rem;
  background: linear-gradient(#fdfdfd, #f0f0f0);
  color: #111;
  font: inherit;
  font-size: 1.17rem;
`;
const Tabs = styled.div`
  flex: none;
  display: flex;
  align-items: flex-start;
  height: 2.7rem;
`;
const Tab = styled.span`
  display: flex;
  align-items: center;
  justify-content: center;
  width: ${(p) => u(p.$w)};
  height: ${(p) => (p.$active ? "2.6rem" : "2.4rem")};
  border: 0.09rem solid #b0b0b0;
  border-top-color: ${(p) => (p.$active ? "#f6f6f6" : "#b0b0b0")};
  border-left-width: ${(p) => (p.$first ? 0 : "0.09rem")};
  border-radius: 0 0 0.25rem 0.25rem;
  background: ${(p) => (p.$active ? "linear-gradient(#f4f4f4, #fdfdfd)" : "#dadada")};
  font-size: 1.135rem;
`;
const TabRule = styled.span`
  flex: 1;
  height: 0.09rem;
  background: #b0b0b0;
`;
const PropsForm = styled.div`
  flex: 1;
  display: flex;
  flex-direction: column;
  gap: 0.74rem;
  padding: 1.13rem 0 0;
`;
const FormRow = styled.div`
  display: flex;
  align-items: center;
  padding-left: ${(p) => u(p.$left)};
`;
const FormLabel = styled.span`
  flex: none;
  width: ${(p) => u(p.$w)};
  font-size: 1.13rem;
`;
const HistoryList = styled.div`
  flex: none;
  height: 10.1rem;
  border-top: 0.09rem solid #b0b0b0;
  background: #fff;
`;
const HistoryRow = styled.div`
  display: flex;
  align-items: center;
  height: 2rem;
  padding: 0.1rem 0 0 0.45rem;
  background: #efefef;
  font-size: 1.39rem;
  letter-spacing: 0.01em;
`;
const VSplit = styled.div`
  flex: none;
  width: 1.12rem;
  display: flex;
  align-items: center;
  justify-content: center;
  padding-top: 1.2rem;
  &::before {
    content: "";
    width: 0.2rem;
    height: 1.8rem;
    background-image: radial-gradient(circle, #aaa 0.055rem, transparent 0.07rem);
    background-size: 0.2rem 0.3rem;
  }
`;
const ModelView = styled.div`
  flex: 1;
  display: flex;
  flex-direction: column;
  margin: 0.5rem 0.32rem 0 0;
  border-left: 0.1rem solid #b0b0b0;
  border-right: 0.1rem solid #b0b0b0;
  background: #fff;
`;
const ModelRow = styled.div`
  flex: 1;
  display: flex;
  justify-content: flex-end;
`;
const BottomScroll = styled.div`
  display: flex;
  flex-direction: column;
  padding-right: 1.6rem;
  background: #efefef;
`;

const T = (name, extra = {}) => <Tool key={name} name={name} w={39.2} h={38} size={28} {...extra} />;

const ModelDesigner = () => (
  <DesignerWindow>
    <TitleBar $h={31.4} $dialog>
      <Icon name="qgis" size={18.5} />
      <TitleText $gap={5.2}>Model Designer - model</TitleText>
      <WindowButtons $gap={43.8}>
        <Glyph viewBox="0 0 10 10" $size={12}><path d="M0 4.5H10" /></Glyph>
        <Glyph viewBox="0 0 10 10" $size={11.5}><rect x=".3" y=".3" width="9.6" height="9.6" rx=".8" /></Glyph>
        <Glyph viewBox="0 0 10 10" $size={12} $stroke={0.9}><path d="M.3 .3L9.7 9.7M9.7 .3L.3 9.7" /></Glyph>
      </WindowButtons>
    </TitleBar>
    <MenuStrip $h={24.4} $left={10.6} $dialog>
      <MenuItem $w={58.5}><Mnemonic text="&Model" /></MenuItem>
      <MenuItem $w={41.7}><Mnemonic text="&Edit" /></MenuItem>
      <MenuItem $w={50}><Mnemonic text="&View" /></MenuItem>
    </MenuStrip>
    <Toolbar $h={45.1} $top={2.6}>
      <Grip $w={14} $pad={5.5} />
      {["newDoc", "open", "save", "saveAs", "modelHome"].map((n) => T(n))}
      <VSep />
      {T("hand")}
      {T("select", { pressed: [38, 37] })}
      <VSep />
      {T("undo", { faded: true })}
      {T("redo", { faded: true })}
      <VSep />
      {["zoomIn", "zoomOut", "zoomNative", "zoomFull"].map((n) => T(n))}
      <VSep />
      {["exPython", "exImage", "exPdf", "exSvg"].map((n) => T(n))}
      <VSep />
      {T("helpEdit")}
      <VSep />
      {T("play")}
    </Toolbar>
    <DesignerBody>
      <DesignerSide>
        <PanelHead $h={25.4} $left={3.6} $font={13.6}><HeadText>Inputs</HeadText><FloatMark /></PanelHead>
        <ParamTree>
          <ParamList>
            <ParamRow $head><Caret />Parameters</ParamRow>
            <ParamRow $alt><Icon name="param" size={17.5} />Align raster Layers</ParamRow>
            <ParamRow><Icon name="param" size={17.5} />Annotation Layer</ParamRow>
            <ParamRow $alt><Icon name="param" size={17.5} />Authentication Configuration</ParamRow>
          </ParamList>
          <ScrollTrack $size={16.5} $edge>
            <ScrollEnd $line="0 0 0.08rem 0"><ArrowHead $dir="up" /></ScrollEnd>
            <ScrollGap $len={31} />
            <ScrollThumb $len={17.5} />
            <ScrollEnd $line="0"><ArrowHead $dir="down" /></ScrollEnd>
          </ScrollTrack>
        </ParamTree>
        <ButtonRow><PushButton>Reorder Model Inputs...</PushButton></ButtonRow>
        <Tabs>
          <Tab $w={62.3} $active $first>Inputs</Tab>
          <Tab $w={83.8}>Algorithms</Tab>
          <TabRule />
        </Tabs>
        <SplitDots $h={9} />
        <PanelHead $h={22} $left={3.6} $font={13.9}><HeadText>Model Properties</HeadText><FloatMark /></PanelHead>
        <PropsForm>
          <FormRow $left={8.5}>
            <FormLabel $w={39.4}>Name</FormLabel>
            <Field $w={252.4} $h={25.4} $font={12.45}><FieldText $pad={2}>Raster_flooding_analysis</FieldText></Field>
          </FormRow>
          <FormRow $left={9.6}>
            <FormLabel $w={39.4}>Group</FormLabel>
            <Field $w={252.9} $h={25.4} $font={11.65} $hint><FieldText $pad={2.2}>Enter group name here</FieldText></Field>
          </FormRow>
        </PropsForm>
        <Tabs>
          <Tab $w={75.6} $first>Variables</Tab>
          <Tab $w={115.6} $active>Model Properties</Tab>
          <TabRule />
        </Tabs>
        <SplitDots $h={9} />
        <PanelHead $h={22} $left={3.6} $font={13.9}><HeadText>Undo History</HeadText><FloatMark /><CloseMark /></PanelHead>
        <HistoryList><HistoryRow>&lt;empty&gt;</HistoryRow></HistoryList>
      </DesignerSide>
      <VSplit />
      <ModelView>
        <ModelRow>
          <ScrollTrack $size={16.5}>
            <ScrollEnd $len={16.5} $line="0 0 0.12rem 0"><ArrowHead $dir="up" /></ScrollEnd>
            <ScrollGap $len={64.5} />
            <ScrollThumb />
            <ScrollEnd $len={16.5} $line="0"><ArrowHead $dir="down" /></ScrollEnd>
          </ScrollTrack>
        </ModelRow>
        <BottomScroll>
          <ScrollTrack $across $size={14}>
            <ScrollEnd $len={16} $line="0 0.08rem 0 0"><ArrowHead $dir="left" /></ScrollEnd>
            <ScrollGap $len={43} />
            <ScrollThumb />
            <ScrollEnd $len={16} $line="0"><ArrowHead $dir="right" /></ScrollEnd>
          </ScrollTrack>
        </BottomScroll>
      </ModelView>
    </DesignerBody>
  </DesignerWindow>
);

/* ------------------------------------------------------------------ */
/* Tutorial annotations over the windows                               */
/* ------------------------------------------------------------------ */

const RedFrame = styled.div`
  position: absolute;
  left: ${(p) => u(p.$x)};
  top: ${(p) => u(p.$y)};
  width: ${(p) => u(p.$w)};
  height: ${(p) => u(p.$h)};
  border: 0.24rem solid ${RED};
`;
const StepBadge = styled.div`
  position: absolute;
  left: ${(p) => u(p.$x - 19.75)};
  top: ${(p) => u(p.$y - 19.75)};
  display: flex;
  align-items: center;
  justify-content: center;
  width: 3.95rem;
  height: 3.95rem;
  border-radius: 50%;
  background: ${RED};
  color: #fff;
  font-family: "Liberation Sans", Arial, sans-serif;
  font-size: 2.7rem;
  line-height: 1;
`;
const FRAMES = [[631.4, 27.8, 66.3, 24.5], [631.2, 73.8, 287.9, 27], [356.7, 187.7, 37.6, 34], [398.4, 187.7, 32.8, 34], [307, 440, 298, 34.8]];
const STEPS = [[607, 26.9], [944.8, 68.9], [691.5, 154.9], [634.8, 457], [463.4, 170.2], [342.2, 162]];

/* ------------------------------------------------------------------ */

const MENUS = [["Pro&ject", 51.6], ["&Edit", 35.6], ["&View", 41], ["&Layer", 43.2], ["&Settings", 58.2], ["&Plugins", 54], ["Vect&or", 48.9], ["&Raster", 48.2], ["&Database", 65], ["&Web", 40.1], ["&Mesh", 44.1], ["HCMGIS", 95.8]];

export default function App() {
  return (
    <>
      <GlobalStyle />
      <Desktop>
        <TitleBar $h={23.55}>
          <Icon name="qgis" size={16} />
          <TitleText $gap={5.2}>*Corso_Cop4Schools_2024_pt7 — QGIS</TitleText>
          <WindowButtons $gap={37.4}>
            <Glyph viewBox="0 0 10 10" $size={10}><path d="M0 4.6H10" /></Glyph>
            <Glyph viewBox="0 0 10 10" $size={10}><rect x=".2" y="2" width="7.6" height="7.8" rx=".8" /><path d="M2.4 .3H8.2Q9.8 .3 9.8 2V7.6" /></Glyph>
            <Glyph viewBox="0 0 10 10" $size={10}><path d="M.2 .2L9.8 9.8M9.8 .2L.2 9.8" /></Glyph>
          </WindowButtons>
        </TitleBar>
        <MenuStrip $h={21.3} $left={10.2}>
          {MENUS.map(([text, w]) => <MenuItem key={text} $w={w}><Mnemonic text={text} /></MenuItem>)}
          <MenuItem $w={64} $active><Mnemonic text="Pro&cessing" /></MenuItem>
          <MenuItem $w={39.8}><Mnemonic text="&Help" /></MenuItem>
          <MenuItem $w={50}><Mnemonic text="Vett&ore" /></MenuItem>
        </MenuStrip>

        <Toolbar $h={39.1}>
          <Grip $w={12.5} />
          {["newDoc", "open", "save", "newLayout", "layoutMgr", "style"].map((n) => <Tool key={n} name={n} />)}
          <Grip />
          <Tool name="hand" pressed={[32.5, 31.5]} />
          <Tool name="panSel" faded />
          <Tool name="zoomIn" />
          <Tool name="zoomOut" />
          <Tool name="zoomFull" />
          <Tool name="zoomSel" faded />
          <Tool name="zoomLayer" />
          <Tool name="zoomNative" faded />
          <Tool name="zoomLast" />
          <Tool name="zoomNext" faded />
          <Tool name="newView" />
          <Tool name="new3d" />
          <Space $w={275.5} />
          <Drop />
          <Space $w={36.6} />
          <Drop />
          <Grip />
          <Tool name="identify" />
          <Tool name="abacus" />
          <Tool name="gear" />
          <Tool name="sigma" />
          <Tool name="table" />
          <Drop />
          <Tool name="ruler" />
          <Drop />
          <Tool name="tip" />
          <Tool name="action" faded />
          <Drop faded />
        </Toolbar>

        <Toolbar $h={40.1} $top={2}>
          <Grip $w={12.5} />
          {["dataSource", "geopackage", "shape", "feather", "chip", "mesh", "gpx"].map((n) => <Tool key={n} name={n} />)}
          <Grip />
          <Tool name="pencils" faded corner />
          <Tool name="pencil" />
          <Tool name="saveEdits" faded />
          <Tool name="digitize" faded />
          <Drop faded />
          <Tool name="blob" faded />
          <Tool name="vertexTool" faded />
          <Drop faded />
          <Tool name="multiEdit" faded />
          <Tool name="trash" faded />
          <Tool name="scissors" faded />
          <Tool name="copy" faded />
          <Space $w={301.4} />
          <Tool name="labelShow" faded />
          <Tool name="labelMove" faded />
          <Tool name="labelRotate" faded />
          <Tool name="labelEdit" faded />
          <Grip />
          <Tool name="database" />
          <Grip />
          <Tool name="globePlus" />
          <Tool name="globeFind" />
          <Tool name="globeBino" />
          <Grip />
          <Tool name="python" />
          <Tool name="stack" />
          <Tool name="niwa" />
          <Grip />
          <Tool name="help" />
          <Grip />
        </Toolbar>

        <Toolbar $h={39.1} $top={3} $line={1.5}>
          <Grip $w={12.5} />
          <Tool name="brain" />
          <Grip />
          <Tool name="clip" />
          <Tool name="rgbLens" />
          <RgbLabel><RadioDot />RGB =</RgbLabel>
          <Field $w={81} $h={22}><FieldText>-</FieldText><Combo><Caret /></Combo></Field>
          <Tool name="percent" />
          <Space $w={774} />
          <Field $w={58.5} $gap={1.4}><FieldText /><Stepper /></Field>
          <Tool name="bin" />
          <Tool name="kml" />
          <Grip $w={15.8} />
          <Tool name="matrix" />
          <Field $w={60.5} $gap={1.8} $font={10.8}><FieldText $pad={4}>0</FieldText><Stepper /></Field>
          <Tool name="apply" w={34} />
          <Field $w={60.5} $gap={1.8} $font={10.8}><FieldText $pad={4}>1</FieldText><Stepper /></Field>
          <Tool name="apply" w={34} />
          <Space $w={43} />
          <Chevrons $w={12}>»</Chevrons>
          <Grip $w={12.6} />
          <Tool name="georef" w={40} size={20.5} />
          <Chevrons $w={12}>»</Chevrons>
        </Toolbar>

        <Workspace>
          <LeftPanels />
          <MainColumn>
            <MapCanvas><FloodMap /></MapCanvas>
            <BottomPanel>
              <BottomHead><FloatMark w={11.2} /><CloseMark w={11.2} /></BottomHead>
              <LogBox>
                <ScrollTrack $size={14}>
                  <ScrollEnd $len={16} $line="0 0 0.08rem 0"><ArrowHead $dir="up" /></ScrollEnd>
                  <ScrollThumb $len={16.5} />
                  <ScrollGap />
                  <ScrollEnd $len={15} $line="0.08rem 0 0 0"><ArrowHead $dir="down" /></ScrollEnd>
                </ScrollTrack>
              </LogBox>
            </BottomPanel>
          </MainColumn>
        </Workspace>
        <Status />

        <MenuPopup>
          <PopupRow><PopupIcon><Icon name="gear" size={14.5} /></PopupIcon><PopupLabel><Mnemonic text="&Toolbox" /></PopupLabel><Shortcut>Ctrl+Alt+T</Shortcut></PopupRow>
          <PopupRow $active><PopupIcon><Icon name="modelGears" size={15.6} /></PopupIcon><PopupLabel><Mnemonic text="&Model Designer..." /></PopupLabel><Shortcut>Ctrl+Alt+G</Shortcut></PopupRow>
          <PopupRow><PopupIcon><Icon name="clock" size={14.8} /></PopupIcon><PopupLabel><Mnemonic text="&History..." /></PopupLabel><Shortcut>Ctrl+Alt+H</Shortcut></PopupRow>
        </MenuPopup>

        <ModelDesigner />

        {FRAMES.map(([x, y, w, h], i) => <RedFrame key={i} $x={x} $y={y} $w={w} $h={h} />)}
        {STEPS.map(([x, y], i) => <StepBadge key={i} $x={x} $y={y}>{i + 1}</StepBadge>)}
      </Desktop>
    </>
  );
}
